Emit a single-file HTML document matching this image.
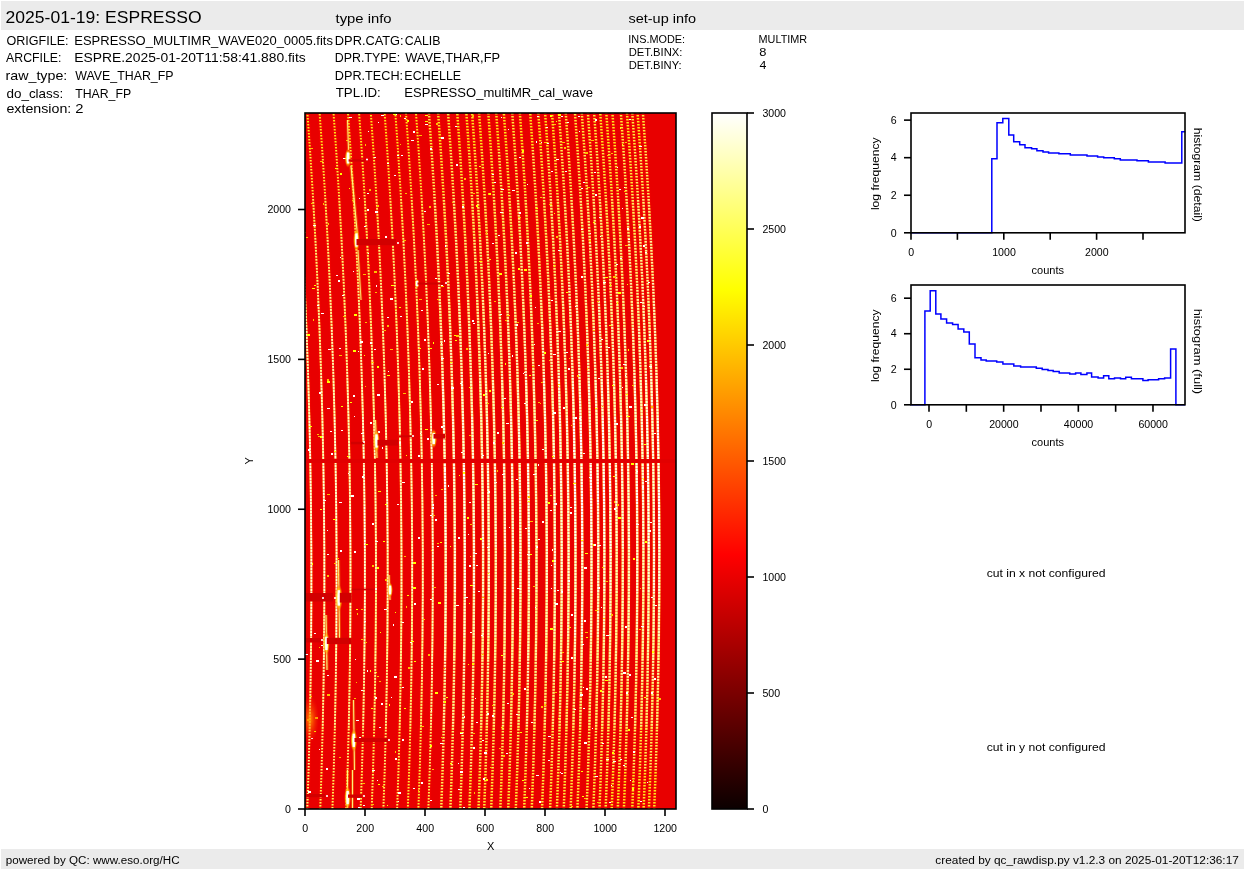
<!DOCTYPE html><html><head><meta charset="utf-8"><style>html,body{margin:0;padding:0;background:#fff;overflow:hidden}svg{display:block}</style></head><body>
<svg width="1245" height="870" viewBox="0 0 1245 870" style="will-change:transform">
<rect x="0" y="0" width="1245" height="870" fill="#fff"/>
<rect x="1" y="1" width="1243" height="29" fill="#ebebeb"/>
<rect x="1" y="849" width="1243" height="20" fill="#ebebeb"/>
<text transform="translate(5.56 22.90) scale(1.0574 1)" font-family="Liberation Sans" font-size="16.6" fill="#000">2025-01-19: ESPRESSO</text>
<text transform="translate(335.53 22.90) scale(1.1681 1)" font-family="Liberation Sans" font-size="12.7" fill="#000">type info</text>
<text transform="translate(628.48 22.90) scale(1.1410 1)" font-family="Liberation Sans" font-size="12.7" fill="#000">set-up info</text>
<text transform="translate(6.48 44.60) scale(0.9897 1)" font-family="Liberation Sans" font-size="12.7" fill="#000">ORIGFILE:</text>
<text transform="translate(6.08 61.70) scale(0.9679 1)" font-family="Liberation Sans" font-size="12.7" fill="#000">ARCFILE:</text>
<text transform="translate(5.49 79.80) scale(1.1227 1)" font-family="Liberation Sans" font-size="12.7" fill="#000">raw_type:</text>
<text transform="translate(6.46 97.60) scale(1.0590 1)" font-family="Liberation Sans" font-size="12.7" fill="#000">do_class:</text>
<text transform="translate(6.43 113.30) scale(1.1220 1)" font-family="Liberation Sans" font-size="12.7" fill="#000">extension:</text>
<text transform="translate(74.32 44.60) scale(1.0228 1)" font-family="Liberation Sans" font-size="12.7" fill="#000">ESPRESSO_MULTIMR_WAVE020_0005.fits</text>
<text transform="translate(74.24 61.70) scale(1.0913 1)" font-family="Liberation Sans" font-size="12.7" fill="#000">ESPRE.2025-01-20T11:58:41.880.fits</text>
<text transform="translate(75.21 79.80) scale(0.9747 1)" font-family="Liberation Sans" font-size="12.7" fill="#000">WAVE_THAR_FP</text>
<text transform="translate(75.17 97.60) scale(0.9669 1)" font-family="Liberation Sans" font-size="12.7" fill="#000">THAR_FP</text>
<text transform="translate(75.33 113.30) scale(1.1645 1)" font-family="Liberation Sans" font-size="12.7" fill="#000">2</text>
<text transform="translate(334.83 45.00) scale(1.0099 1)" font-family="Liberation Sans" font-size="12.7" fill="#000">DPR.CATG:</text>
<text transform="translate(334.87 62.20) scale(0.9761 1)" font-family="Liberation Sans" font-size="12.7" fill="#000">DPR.TYPE:</text>
<text transform="translate(334.85 79.50) scale(0.9971 1)" font-family="Liberation Sans" font-size="12.7" fill="#000">DPR.TECH:</text>
<text transform="translate(335.64 97.20) scale(1.0468 1)" font-family="Liberation Sans" font-size="12.7" fill="#000">TPL.ID:</text>
<text transform="translate(404.84 45.00) scale(0.9734 1)" font-family="Liberation Sans" font-size="12.7" fill="#000">CALIB</text>
<text transform="translate(405.20 62.20) scale(1.0117 1)" font-family="Liberation Sans" font-size="12.7" fill="#000">WAVE,THAR,FP</text>
<text transform="translate(404.36 79.50) scale(0.9815 1)" font-family="Liberation Sans" font-size="12.7" fill="#000">ECHELLE</text>
<text transform="translate(404.31 97.20) scale(1.0287 1)" font-family="Liberation Sans" font-size="12.7" fill="#000">ESPRESSO_multiMR_cal_wave</text>
<text transform="translate(628.34 42.85) scale(1.0070 1)" font-family="Liberation Sans" font-size="10.8" fill="#000">INS.MODE:</text>
<text transform="translate(628.73 55.70) scale(1.0414 1)" font-family="Liberation Sans" font-size="10.8" fill="#000">DET.BINX:</text>
<text transform="translate(628.74 68.55) scale(1.0376 1)" font-family="Liberation Sans" font-size="10.8" fill="#000">DET.BINY:</text>
<text transform="translate(758.56 42.85) scale(1.0044 1)" font-family="Liberation Sans" font-size="10.8" fill="#000">MULTIMR</text>
<text transform="translate(759.16 55.70) scale(1.1934 1)" font-family="Liberation Sans" font-size="10.8" fill="#000">8</text>
<text transform="translate(759.43 68.55) scale(1.1432 1)" font-family="Liberation Sans" font-size="10.8" fill="#000">4</text>
<text transform="translate(986.66 576.70) scale(1.1060 1)" font-family="Liberation Sans" font-size="11.0" fill="#000">cut in x not configured</text>
<text transform="translate(986.66 750.90) scale(1.1060 1)" font-family="Liberation Sans" font-size="11.0" fill="#000">cut in y not configured</text>
<text transform="translate(5.72 863.80) scale(1.0583 1)" font-family="Liberation Sans" font-size="11.0" fill="#000">powered by QC: www.eso.org/HC</text>
<text transform="translate(935.37 863.80) scale(1.0776 1)" font-family="Liberation Sans" font-size="11.0" fill="#000">created by qc_rawdisp.py v1.2.3 on 2025-01-20T12:36:17</text>
<defs><clipPath id="hm"><rect x="305.00" y="113.00" width="371.00" height="696.00"/></clipPath></defs>
<g clip-path="url(#hm)">
<rect x="305.00" y="113.00" width="371.00" height="696.00" fill="#e80000"/>
<path d="M293.80 105.00Q320.11 460.00 307.09 815.00M306.82 105.00Q333.14 460.00 320.06 815.00M319.04 105.00Q345.37 460.00 332.22 815.00M332.97 105.00Q359.30 460.00 346.08 815.00M347.39 105.00Q373.73 460.00 360.44 815.00M358.51 105.00Q384.86 460.00 371.51 815.00M370.23 105.00Q396.59 460.00 383.18 815.00M384.05 105.00Q410.42 460.00 396.94 815.00M394.77 105.00Q421.14 460.00 407.61 815.00M405.39 105.00Q431.77 460.00 418.18 815.00M415.41 105.00Q441.79 460.00 428.15 815.00M428.33 105.00Q454.72 460.00 441.01 815.00M437.55 105.00Q463.94 460.00 450.19 815.00M447.47 105.00Q473.87 460.00 460.06 815.00M456.68 105.00Q483.09 460.00 469.23 815.00M465.80 105.00Q492.21 460.00 478.31 815.00M471.51 105.00Q497.92 460.00 483.99 815.00M478.52 105.00Q504.94 460.00 490.97 815.00M487.74 105.00Q514.16 460.00 500.14 815.00M495.65 105.00Q522.08 460.00 508.02 815.00M503.26 105.00Q529.69 460.00 515.59 815.00M511.68 105.00Q538.11 460.00 523.97 815.00M519.29 105.00Q545.73 460.00 531.55 815.00M529.61 105.00Q556.06 460.00 541.82 815.00M537.73 105.00Q564.17 460.00 549.89 815.00M544.54 105.00Q570.99 460.00 556.67 815.00M551.45 105.00Q577.91 460.00 563.55 815.00M558.37 105.00Q584.82 460.00 570.43 815.00M565.18 105.00Q591.64 460.00 577.21 815.00M574.40 105.00Q600.86 460.00 586.38 815.00M581.21 105.00Q607.67 460.00 593.16 815.00M587.32 105.00Q613.79 460.00 599.24 815.00M593.53 105.00Q620.00 460.00 605.42 815.00M599.64 105.00Q626.12 460.00 611.50 815.00M605.75 105.00Q632.23 460.00 617.58 815.00M611.87 105.00Q638.34 460.00 623.67 815.00M620.28 105.00Q646.76 460.00 632.04 815.00M626.39 105.00Q652.88 460.00 638.12 815.00M631.70 105.00Q658.19 460.00 643.40 815.00M637.01 105.00Q663.50 460.00 648.69 815.00M642.32 105.00Q668.81 460.00 653.97 815.00" fill="none" stroke="#ff0800" stroke-width="4.5" stroke-opacity="0.3"/>
<defs>
<pattern id="g00" patternUnits="userSpaceOnUse" x="0" y="0" width="10" height="3"><rect x="0" y="0" width="10" height="1" fill="#fff"/></pattern>
<pattern id="g01" patternUnits="userSpaceOnUse" x="0" y="1" width="10" height="3"><rect x="0" y="0" width="10" height="1" fill="#fff"/></pattern>
<pattern id="g02" patternUnits="userSpaceOnUse" x="0" y="2" width="10" height="3"><rect x="0" y="0" width="10" height="1" fill="#fff"/></pattern>
<mask id="gm0" maskUnits="userSpaceOnUse" x="300" y="100" width="400" height="720"><rect x="300" y="100" width="400" height="720" fill="url(#g00)"/><rect x="300" y="100" width="400" height="100" fill="url(#g01)" fill-opacity="0.50"/><rect x="300" y="100" width="400" height="100" fill="url(#g02)" fill-opacity="0.05"/><rect x="300" y="200" width="400" height="100" fill="url(#g01)" fill-opacity="0.72"/><rect x="300" y="200" width="400" height="100" fill="url(#g02)" fill-opacity="0.20"/><rect x="300" y="300" width="400" height="80" fill="url(#g01)" fill-opacity="0.90"/><rect x="300" y="300" width="400" height="80" fill="url(#g02)" fill-opacity="0.35"/><rect x="300" y="380" width="400" height="280" fill="url(#g01)" fill-opacity="1.00"/><rect x="300" y="380" width="400" height="280" fill="url(#g02)" fill-opacity="0.65"/><rect x="300" y="660" width="400" height="70" fill="url(#g01)" fill-opacity="0.85"/><rect x="300" y="660" width="400" height="70" fill="url(#g02)" fill-opacity="0.30"/><rect x="300" y="730" width="400" height="90" fill="url(#g01)" fill-opacity="0.55"/><rect x="300" y="730" width="400" height="90" fill="url(#g02)" fill-opacity="0.05"/></mask>
<pattern id="g10" patternUnits="userSpaceOnUse" x="0" y="1" width="10" height="3"><rect x="0" y="0" width="10" height="1" fill="#fff"/></pattern>
<pattern id="g11" patternUnits="userSpaceOnUse" x="0" y="2" width="10" height="3"><rect x="0" y="0" width="10" height="1" fill="#fff"/></pattern>
<pattern id="g12" patternUnits="userSpaceOnUse" x="0" y="3" width="10" height="3"><rect x="0" y="0" width="10" height="1" fill="#fff"/></pattern>
<mask id="gm1" maskUnits="userSpaceOnUse" x="300" y="100" width="400" height="720"><rect x="300" y="100" width="400" height="720" fill="url(#g10)"/><rect x="300" y="100" width="400" height="100" fill="url(#g11)" fill-opacity="0.50"/><rect x="300" y="100" width="400" height="100" fill="url(#g12)" fill-opacity="0.05"/><rect x="300" y="200" width="400" height="100" fill="url(#g11)" fill-opacity="0.72"/><rect x="300" y="200" width="400" height="100" fill="url(#g12)" fill-opacity="0.20"/><rect x="300" y="300" width="400" height="80" fill="url(#g11)" fill-opacity="0.90"/><rect x="300" y="300" width="400" height="80" fill="url(#g12)" fill-opacity="0.35"/><rect x="300" y="380" width="400" height="280" fill="url(#g11)" fill-opacity="1.00"/><rect x="300" y="380" width="400" height="280" fill="url(#g12)" fill-opacity="0.65"/><rect x="300" y="660" width="400" height="70" fill="url(#g11)" fill-opacity="0.85"/><rect x="300" y="660" width="400" height="70" fill="url(#g12)" fill-opacity="0.30"/><rect x="300" y="730" width="400" height="90" fill="url(#g11)" fill-opacity="0.55"/><rect x="300" y="730" width="400" height="90" fill="url(#g12)" fill-opacity="0.05"/></mask>
<pattern id="g20" patternUnits="userSpaceOnUse" x="0" y="2" width="10" height="3"><rect x="0" y="0" width="10" height="1" fill="#fff"/></pattern>
<pattern id="g21" patternUnits="userSpaceOnUse" x="0" y="3" width="10" height="3"><rect x="0" y="0" width="10" height="1" fill="#fff"/></pattern>
<pattern id="g22" patternUnits="userSpaceOnUse" x="0" y="4" width="10" height="3"><rect x="0" y="0" width="10" height="1" fill="#fff"/></pattern>
<mask id="gm2" maskUnits="userSpaceOnUse" x="300" y="100" width="400" height="720"><rect x="300" y="100" width="400" height="720" fill="url(#g20)"/><rect x="300" y="100" width="400" height="100" fill="url(#g21)" fill-opacity="0.50"/><rect x="300" y="100" width="400" height="100" fill="url(#g22)" fill-opacity="0.05"/><rect x="300" y="200" width="400" height="100" fill="url(#g21)" fill-opacity="0.72"/><rect x="300" y="200" width="400" height="100" fill="url(#g22)" fill-opacity="0.20"/><rect x="300" y="300" width="400" height="80" fill="url(#g21)" fill-opacity="0.90"/><rect x="300" y="300" width="400" height="80" fill="url(#g22)" fill-opacity="0.35"/><rect x="300" y="380" width="400" height="280" fill="url(#g21)" fill-opacity="1.00"/><rect x="300" y="380" width="400" height="280" fill="url(#g22)" fill-opacity="0.65"/><rect x="300" y="660" width="400" height="70" fill="url(#g21)" fill-opacity="0.85"/><rect x="300" y="660" width="400" height="70" fill="url(#g22)" fill-opacity="0.30"/><rect x="300" y="730" width="400" height="90" fill="url(#g21)" fill-opacity="0.55"/><rect x="300" y="730" width="400" height="90" fill="url(#g22)" fill-opacity="0.05"/></mask>
</defs>
<g mask="url(#gm0)">
<path d="M319.04 105.00Q320.69 127.19 322.18 149.38M332.97 105.00Q334.61 127.19 336.10 149.38M347.39 105.00Q349.04 127.19 350.53 149.38M358.51 105.00Q360.16 127.19 361.65 149.38M384.05 105.00Q385.70 127.19 387.19 149.38M415.41 105.00Q417.06 127.19 418.55 149.38M322.18 149.38Q323.67 171.56 325.01 193.75M336.10 149.38Q337.60 171.56 338.93 193.75M350.53 149.38Q352.02 171.56 353.36 193.75M361.65 149.38Q363.14 171.56 364.48 193.75M387.19 149.38Q388.69 171.56 390.02 193.75M418.55 149.38Q420.04 171.56 421.38 193.75M325.01 193.75Q326.34 215.94 327.53 238.12M333.71 770.62Q333.04 792.81 332.22 815.00M338.93 193.75Q340.27 215.94 341.45 238.12M347.58 770.62Q346.91 792.81 346.08 815.00M353.36 193.75Q354.69 215.94 355.88 238.12M361.95 770.62Q361.27 792.81 360.44 815.00M364.48 193.75Q365.81 215.94 367.00 238.12M367.00 238.12Q368.18 260.31 369.20 282.50M374.23 726.25Q373.70 748.44 373.03 770.62M373.03 770.62Q372.35 792.81 371.51 815.00M390.02 193.75Q391.36 215.94 392.54 238.12M399.69 726.25Q399.16 748.44 398.47 770.62M398.47 770.62Q397.78 792.81 396.94 815.00M421.38 193.75Q422.72 215.94 423.90 238.12M429.70 770.62Q429.00 792.81 428.15 815.00M327.53 238.12Q328.71 260.31 329.74 282.50M334.89 726.25Q334.38 748.44 333.71 770.62M341.45 238.12Q342.63 260.31 343.66 282.50M343.66 282.50Q344.69 304.69 345.56 326.88M348.77 726.25Q348.25 748.44 347.58 770.62M355.88 238.12Q357.06 260.31 358.09 282.50M363.15 726.25Q362.63 748.44 361.95 770.62M369.20 282.50Q370.23 304.69 371.10 326.88M375.12 681.88Q374.75 704.06 374.23 726.25M392.54 238.12Q393.72 260.31 394.75 282.50M394.75 282.50Q395.77 304.69 396.64 326.88M400.59 681.88Q400.22 704.06 399.69 726.25M423.90 238.12Q425.08 260.31 426.10 282.50M430.94 726.25Q430.40 748.44 429.70 770.62M329.74 282.50Q330.77 304.69 331.64 326.88M335.76 681.88Q335.40 704.06 334.89 726.25M345.56 326.88Q346.44 349.06 347.16 371.25M350.22 637.50Q350.01 659.69 349.65 681.88M349.65 681.88Q349.29 704.06 348.77 726.25M358.09 282.50Q359.11 304.69 359.98 326.88M364.03 681.88Q363.67 704.06 363.15 726.25M371.10 326.88Q371.97 349.06 372.69 371.25M372.69 371.25Q373.41 393.44 373.97 415.62M375.98 593.12Q375.92 615.31 375.70 637.50M375.70 637.50Q375.49 659.69 375.12 681.88M396.64 326.88Q397.51 349.06 398.22 371.25M398.22 371.25Q398.94 393.44 399.50 415.62M401.47 593.12Q401.41 615.31 401.19 637.50M401.19 637.50Q400.97 659.69 400.59 681.88M426.10 282.50Q427.12 304.69 427.99 326.88M431.86 681.88Q431.48 704.06 430.94 726.25M331.64 326.88Q332.52 349.06 333.24 371.25M333.24 371.25Q333.96 393.44 334.52 415.62M336.33 637.50Q336.12 659.69 335.76 681.88M347.16 371.25Q347.87 393.44 348.44 415.62M348.44 415.62Q349.00 437.81 349.41 460.00M349.41 460.00Q349.82 482.19 350.08 504.38M350.43 548.75Q350.53 570.94 350.48 593.12M350.48 593.12Q350.43 615.31 350.22 637.50M359.98 326.88Q360.86 349.06 361.57 371.25M361.57 371.25Q362.29 393.44 362.85 415.62M364.61 637.50Q364.40 659.69 364.03 681.88M373.97 415.62Q374.53 437.81 374.94 460.00M374.94 460.00Q375.34 482.19 375.59 504.38M375.59 504.38Q375.84 526.56 375.94 548.75M375.94 548.75Q376.04 570.94 375.98 593.12M399.50 415.62Q400.06 437.81 400.46 460.00M400.46 460.00Q400.86 482.19 401.11 504.38M401.11 504.38Q401.35 526.56 401.45 548.75M401.45 548.75Q401.54 570.94 401.47 593.12M427.99 326.88Q428.86 349.06 429.57 371.25M429.57 371.25Q430.28 393.44 430.83 415.62M432.77 593.12Q432.70 615.31 432.47 637.50M432.47 637.50Q432.24 659.69 431.86 681.88M334.52 415.62Q335.09 437.81 335.50 460.00M335.50 460.00Q335.91 482.19 336.17 504.38M336.17 504.38Q336.43 526.56 336.53 548.75M336.53 548.75Q336.63 570.94 336.58 593.12M336.58 593.12Q336.53 615.31 336.33 637.50M350.08 504.38Q350.33 526.56 350.43 548.75M362.85 415.62Q363.42 437.81 363.83 460.00M363.83 460.00Q364.23 482.19 364.49 504.38M364.84 548.75Q364.94 570.94 364.88 593.12M364.88 593.12Q364.82 615.31 364.61 637.50M430.83 415.62Q431.39 437.81 431.79 460.00M431.79 460.00Q432.18 482.19 432.43 504.38M432.43 504.38Q432.67 526.56 432.75 548.75M432.75 548.75Q432.84 570.94 432.77 593.12M364.49 504.38Q364.74 526.56 364.84 548.75" fill="none" stroke="#ffe000" stroke-width="2.0"/>
<path d="M447.47 105.00Q449.12 127.19 450.61 149.38M459.82 149.38Q461.32 171.56 462.65 193.75M470.81 770.62Q470.10 792.81 469.23 815.00M468.94 149.38Q470.43 171.56 471.77 193.75M479.89 770.62Q479.17 792.81 478.31 815.00M474.65 149.38Q476.15 171.56 477.48 193.75M485.57 770.62Q484.86 792.81 483.99 815.00M506.41 149.38Q507.90 171.56 509.24 193.75M517.20 770.62Q516.48 792.81 515.59 815.00M543.44 770.62Q542.71 792.81 541.82 815.00M558.37 105.00Q560.02 127.19 561.51 149.38M572.07 770.62Q571.33 792.81 570.43 815.00M574.40 105.00Q576.05 127.19 577.54 149.38M588.03 770.62Q587.29 792.81 586.38 815.00M602.79 149.38Q604.28 171.56 605.62 193.75M450.61 149.38Q452.10 171.56 453.44 193.75M461.63 770.62Q460.92 792.81 460.06 815.00M462.65 193.75Q463.99 215.94 465.17 238.12M471.77 193.75Q473.11 215.94 474.28 238.12M481.15 726.25Q480.60 748.44 479.89 770.62M477.48 193.75Q478.82 215.94 479.99 238.12M486.84 726.25Q486.29 748.44 485.57 770.62M509.24 193.75Q510.57 215.94 511.75 238.12M518.49 726.25Q517.92 748.44 517.20 770.62M532.76 149.38Q534.25 171.56 535.59 193.75M535.59 193.75Q536.92 215.94 538.10 238.12M544.74 726.25Q544.17 748.44 543.44 770.62M561.51 149.38Q563.01 171.56 564.34 193.75M573.39 726.25Q572.81 748.44 572.07 770.62M577.54 149.38Q579.04 171.56 580.37 193.75M589.36 726.25Q588.78 748.44 588.03 770.62M605.62 193.75Q606.95 215.94 608.13 238.12M614.51 726.25Q613.92 748.44 613.17 770.62M453.44 193.75Q454.77 215.94 455.95 238.12M462.88 726.25Q462.33 748.44 461.63 770.62M465.17 238.12Q466.35 260.31 467.37 282.50M472.07 726.25Q471.52 748.44 470.81 770.62M474.28 238.12Q475.46 260.31 476.48 282.50M482.10 681.88Q481.70 704.06 481.15 726.25M479.99 238.12Q481.17 260.31 482.19 282.50M487.79 681.88Q487.40 704.06 486.84 726.25M511.75 238.12Q512.93 260.31 513.95 282.50M519.46 681.88Q519.05 704.06 518.49 726.25M538.10 238.12Q539.27 260.31 540.29 282.50M545.73 681.88Q545.31 704.06 544.74 726.25M564.34 193.75Q565.68 215.94 566.85 238.12M574.39 681.88Q573.97 704.06 573.39 726.25M580.37 193.75Q581.71 215.94 582.88 238.12M590.37 681.88Q589.95 704.06 589.36 726.25M608.13 238.12Q609.30 260.31 610.31 282.50M615.54 681.88Q615.11 704.06 614.51 726.25M455.95 238.12Q457.13 260.31 458.15 282.50M463.82 681.88Q463.43 704.06 462.88 726.25M467.37 282.50Q468.39 304.69 469.25 326.88M473.64 637.50Q473.41 659.69 473.01 681.88M473.01 681.88Q472.62 704.06 472.07 726.25M476.48 282.50Q477.50 304.69 478.37 326.88M478.37 326.88Q479.23 349.06 479.94 371.25M482.74 637.50Q482.50 659.69 482.10 681.88M482.19 282.50Q483.21 304.69 484.08 326.88M488.43 637.50Q488.19 659.69 487.79 681.88M513.95 282.50Q514.97 304.69 515.83 326.88M520.11 637.50Q519.86 659.69 519.46 681.88M540.29 282.50Q541.31 304.69 542.17 326.88M546.39 637.50Q546.14 659.69 545.73 681.88M566.85 238.12Q568.03 260.31 569.04 282.50M582.88 238.12Q584.05 260.31 585.07 282.50M585.07 282.50Q586.08 304.69 586.94 326.88M591.06 637.50Q590.80 659.69 590.37 681.88M610.31 282.50Q611.32 304.69 612.18 326.88M616.62 593.12Q616.51 615.31 616.24 637.50M616.24 637.50Q615.97 659.69 615.54 681.88M458.15 282.50Q459.17 304.69 460.04 326.88M460.04 326.88Q460.90 349.06 461.61 371.25M464.45 637.50Q464.21 659.69 463.82 681.88M469.25 326.88Q470.12 349.06 470.82 371.25M470.82 371.25Q471.53 393.44 472.08 415.62M473.96 593.12Q473.88 615.31 473.64 637.50M479.94 371.25Q480.64 393.44 481.19 415.62M481.19 415.62Q481.74 437.81 482.13 460.00M483.06 548.75Q483.14 570.94 483.06 593.12M483.06 593.12Q482.98 615.31 482.74 637.50M484.08 326.88Q484.94 349.06 485.64 371.25M485.64 371.25Q486.35 393.44 486.90 415.62M488.76 593.12Q488.67 615.31 488.43 637.50M515.83 326.88Q516.69 349.06 517.39 371.25M517.39 371.25Q518.09 393.44 518.63 415.62M520.45 593.12Q520.36 615.31 520.11 637.50M542.17 326.88Q543.02 349.06 543.72 371.25M546.74 593.12Q546.65 615.31 546.39 637.50M569.04 282.50Q570.06 304.69 570.91 326.88M570.91 326.88Q571.77 349.06 572.46 371.25M575.07 637.50Q574.81 659.69 574.39 681.88M586.94 326.88Q587.79 349.06 588.48 371.25M591.43 593.12Q591.33 615.31 591.06 637.50M612.18 326.88Q613.03 349.06 613.72 371.25M613.72 371.25Q614.41 393.44 614.94 415.62M616.68 548.75Q616.73 570.94 616.62 593.12M461.61 371.25Q462.32 393.44 462.87 415.62M462.87 415.62Q463.42 437.81 463.81 460.00M464.76 593.12Q464.68 615.31 464.45 637.50M472.08 415.62Q472.63 437.81 473.02 460.00M473.02 460.00Q473.41 482.19 473.65 504.38M473.65 504.38Q473.88 526.56 473.96 548.75M473.96 548.75Q474.04 570.94 473.96 593.12M482.13 460.00Q482.52 482.19 482.75 504.38M482.75 504.38Q482.99 526.56 483.06 548.75M486.90 415.62Q487.44 437.81 487.83 460.00M487.83 460.00Q488.22 482.19 488.46 504.38M488.46 504.38Q488.69 526.56 488.76 548.75M488.76 548.75Q488.84 570.94 488.76 593.12M518.63 415.62Q519.18 437.81 519.56 460.00M519.56 460.00Q519.95 482.19 520.17 504.38M520.17 504.38Q520.40 526.56 520.47 548.75M520.47 548.75Q520.54 570.94 520.45 593.12M543.72 371.25Q544.42 393.44 544.96 415.62M544.96 415.62Q545.50 437.81 545.88 460.00M545.88 460.00Q546.27 482.19 546.49 504.38M546.49 504.38Q546.71 526.56 546.77 548.75M546.77 548.75Q546.84 570.94 546.74 593.12M572.46 371.25Q573.16 393.44 573.70 415.62M575.48 548.75Q575.54 570.94 575.44 593.12M575.44 593.12Q575.33 615.31 575.07 637.50M588.48 371.25Q589.18 393.44 589.71 415.62M589.71 415.62Q590.25 437.81 590.62 460.00M591.48 548.75Q591.54 570.94 591.43 593.12M614.94 415.62Q615.47 437.81 615.84 460.00M615.84 460.00Q616.21 482.19 616.42 504.38M616.42 504.38Q616.63 526.56 616.68 548.75M463.81 460.00Q464.21 482.19 464.44 504.38M464.44 504.38Q464.68 526.56 464.76 548.75M464.76 548.75Q464.84 570.94 464.76 593.12M573.70 415.62Q574.23 437.81 574.61 460.00M574.61 460.00Q574.99 482.19 575.20 504.38M575.20 504.38Q575.42 526.56 575.48 548.75M590.62 460.00Q591.00 482.19 591.21 504.38M591.21 504.38Q591.43 526.56 591.48 548.75M456.68 105.00Q458.33 127.19 459.82 149.38M465.80 105.00Q467.45 127.19 468.94 149.38M471.51 105.00Q473.16 127.19 474.65 149.38M503.26 105.00Q504.92 127.19 506.41 149.38M529.61 105.00Q531.27 127.19 532.76 149.38M599.64 105.00Q601.30 127.19 602.79 149.38M613.17 770.62Q612.42 792.81 611.50 815.00" fill="none" stroke="#ffe000" stroke-width="2.5"/>
<path d="M319.04 105.00Q320.69 127.19 322.18 149.38M332.97 105.00Q334.61 127.19 336.10 149.38M347.39 105.00Q349.04 127.19 350.53 149.38M358.51 105.00Q360.16 127.19 361.65 149.38M384.05 105.00Q385.70 127.19 387.19 149.38M415.41 105.00Q417.06 127.19 418.55 149.38" fill="none" stroke="#fff" stroke-width="1.7" stroke-opacity="0.125"/>
<path d="M322.18 149.38Q323.67 171.56 325.01 193.75M336.10 149.38Q337.60 171.56 338.93 193.75M350.53 149.38Q352.02 171.56 353.36 193.75M361.65 149.38Q363.14 171.56 364.48 193.75M387.19 149.38Q388.69 171.56 390.02 193.75M418.55 149.38Q420.04 171.56 421.38 193.75" fill="none" stroke="#fff" stroke-width="1.7" stroke-opacity="0.250"/>
<path d="M325.01 193.75Q326.34 215.94 327.53 238.12M333.71 770.62Q333.04 792.81 332.22 815.00M338.93 193.75Q340.27 215.94 341.45 238.12M347.58 770.62Q346.91 792.81 346.08 815.00M353.36 193.75Q354.69 215.94 355.88 238.12M361.95 770.62Q361.27 792.81 360.44 815.00M364.48 193.75Q365.81 215.94 367.00 238.12M367.00 238.12Q368.18 260.31 369.20 282.50M374.23 726.25Q373.70 748.44 373.03 770.62M373.03 770.62Q372.35 792.81 371.51 815.00M390.02 193.75Q391.36 215.94 392.54 238.12M399.69 726.25Q399.16 748.44 398.47 770.62M398.47 770.62Q397.78 792.81 396.94 815.00M421.38 193.75Q422.72 215.94 423.90 238.12M429.70 770.62Q429.00 792.81 428.15 815.00" fill="none" stroke="#fff" stroke-width="1.7" stroke-opacity="0.375"/>
<path d="M327.53 238.12Q328.71 260.31 329.74 282.50M334.89 726.25Q334.38 748.44 333.71 770.62M341.45 238.12Q342.63 260.31 343.66 282.50M343.66 282.50Q344.69 304.69 345.56 326.88M348.77 726.25Q348.25 748.44 347.58 770.62M355.88 238.12Q357.06 260.31 358.09 282.50M363.15 726.25Q362.63 748.44 361.95 770.62M369.20 282.50Q370.23 304.69 371.10 326.88M375.12 681.88Q374.75 704.06 374.23 726.25M392.54 238.12Q393.72 260.31 394.75 282.50M394.75 282.50Q395.77 304.69 396.64 326.88M400.59 681.88Q400.22 704.06 399.69 726.25M423.90 238.12Q425.08 260.31 426.10 282.50M430.94 726.25Q430.40 748.44 429.70 770.62" fill="none" stroke="#fff" stroke-width="1.7" stroke-opacity="0.500"/>
<path d="M329.74 282.50Q330.77 304.69 331.64 326.88M335.76 681.88Q335.40 704.06 334.89 726.25M345.56 326.88Q346.44 349.06 347.16 371.25M350.22 637.50Q350.01 659.69 349.65 681.88M349.65 681.88Q349.29 704.06 348.77 726.25M358.09 282.50Q359.11 304.69 359.98 326.88M364.03 681.88Q363.67 704.06 363.15 726.25M371.10 326.88Q371.97 349.06 372.69 371.25M372.69 371.25Q373.41 393.44 373.97 415.62M375.98 593.12Q375.92 615.31 375.70 637.50M375.70 637.50Q375.49 659.69 375.12 681.88M396.64 326.88Q397.51 349.06 398.22 371.25M398.22 371.25Q398.94 393.44 399.50 415.62M401.47 593.12Q401.41 615.31 401.19 637.50M401.19 637.50Q400.97 659.69 400.59 681.88M426.10 282.50Q427.12 304.69 427.99 326.88M431.86 681.88Q431.48 704.06 430.94 726.25" fill="none" stroke="#fff" stroke-width="1.7" stroke-opacity="0.625"/>
<path d="M331.64 326.88Q332.52 349.06 333.24 371.25M333.24 371.25Q333.96 393.44 334.52 415.62M336.33 637.50Q336.12 659.69 335.76 681.88M347.16 371.25Q347.87 393.44 348.44 415.62M348.44 415.62Q349.00 437.81 349.41 460.00M349.41 460.00Q349.82 482.19 350.08 504.38M350.43 548.75Q350.53 570.94 350.48 593.12M350.48 593.12Q350.43 615.31 350.22 637.50M359.98 326.88Q360.86 349.06 361.57 371.25M361.57 371.25Q362.29 393.44 362.85 415.62M364.61 637.50Q364.40 659.69 364.03 681.88M373.97 415.62Q374.53 437.81 374.94 460.00M374.94 460.00Q375.34 482.19 375.59 504.38M375.59 504.38Q375.84 526.56 375.94 548.75M375.94 548.75Q376.04 570.94 375.98 593.12M399.50 415.62Q400.06 437.81 400.46 460.00M400.46 460.00Q400.86 482.19 401.11 504.38M401.11 504.38Q401.35 526.56 401.45 548.75M401.45 548.75Q401.54 570.94 401.47 593.12M427.99 326.88Q428.86 349.06 429.57 371.25M429.57 371.25Q430.28 393.44 430.83 415.62M432.77 593.12Q432.70 615.31 432.47 637.50M432.47 637.50Q432.24 659.69 431.86 681.88" fill="none" stroke="#fff" stroke-width="1.7" stroke-opacity="0.750"/>
<path d="M334.52 415.62Q335.09 437.81 335.50 460.00M335.50 460.00Q335.91 482.19 336.17 504.38M336.17 504.38Q336.43 526.56 336.53 548.75M336.53 548.75Q336.63 570.94 336.58 593.12M336.58 593.12Q336.53 615.31 336.33 637.50M350.08 504.38Q350.33 526.56 350.43 548.75M362.85 415.62Q363.42 437.81 363.83 460.00M363.83 460.00Q364.23 482.19 364.49 504.38M364.84 548.75Q364.94 570.94 364.88 593.12M364.88 593.12Q364.82 615.31 364.61 637.50M430.83 415.62Q431.39 437.81 431.79 460.00M431.79 460.00Q432.18 482.19 432.43 504.38M432.43 504.38Q432.67 526.56 432.75 548.75M432.75 548.75Q432.84 570.94 432.77 593.12" fill="none" stroke="#fff" stroke-width="1.7" stroke-opacity="0.875"/>
<path d="M364.49 504.38Q364.74 526.56 364.84 548.75" fill="none" stroke="#fff" stroke-width="1.7" stroke-opacity="1.000"/>
<path d="M456.68 105.00Q458.33 127.19 459.82 149.38M465.80 105.00Q467.45 127.19 468.94 149.38M471.51 105.00Q473.16 127.19 474.65 149.38M503.26 105.00Q504.92 127.19 506.41 149.38M529.61 105.00Q531.27 127.19 532.76 149.38M599.64 105.00Q601.30 127.19 602.79 149.38M613.17 770.62Q612.42 792.81 611.50 815.00" fill="none" stroke="#fff" stroke-width="2.1" stroke-opacity="0.125"/>
<path d="M447.47 105.00Q449.12 127.19 450.61 149.38M459.82 149.38Q461.32 171.56 462.65 193.75M470.81 770.62Q470.10 792.81 469.23 815.00M468.94 149.38Q470.43 171.56 471.77 193.75M479.89 770.62Q479.17 792.81 478.31 815.00M474.65 149.38Q476.15 171.56 477.48 193.75M485.57 770.62Q484.86 792.81 483.99 815.00M506.41 149.38Q507.90 171.56 509.24 193.75M517.20 770.62Q516.48 792.81 515.59 815.00M543.44 770.62Q542.71 792.81 541.82 815.00M558.37 105.00Q560.02 127.19 561.51 149.38M572.07 770.62Q571.33 792.81 570.43 815.00M574.40 105.00Q576.05 127.19 577.54 149.38M588.03 770.62Q587.29 792.81 586.38 815.00M602.79 149.38Q604.28 171.56 605.62 193.75" fill="none" stroke="#fff" stroke-width="2.1" stroke-opacity="0.250"/>
<path d="M450.61 149.38Q452.10 171.56 453.44 193.75M461.63 770.62Q460.92 792.81 460.06 815.00M462.65 193.75Q463.99 215.94 465.17 238.12M471.77 193.75Q473.11 215.94 474.28 238.12M481.15 726.25Q480.60 748.44 479.89 770.62M477.48 193.75Q478.82 215.94 479.99 238.12M486.84 726.25Q486.29 748.44 485.57 770.62M509.24 193.75Q510.57 215.94 511.75 238.12M518.49 726.25Q517.92 748.44 517.20 770.62M532.76 149.38Q534.25 171.56 535.59 193.75M535.59 193.75Q536.92 215.94 538.10 238.12M544.74 726.25Q544.17 748.44 543.44 770.62M561.51 149.38Q563.01 171.56 564.34 193.75M573.39 726.25Q572.81 748.44 572.07 770.62M577.54 149.38Q579.04 171.56 580.37 193.75M589.36 726.25Q588.78 748.44 588.03 770.62M605.62 193.75Q606.95 215.94 608.13 238.12M614.51 726.25Q613.92 748.44 613.17 770.62" fill="none" stroke="#fff" stroke-width="2.1" stroke-opacity="0.375"/>
<path d="M453.44 193.75Q454.77 215.94 455.95 238.12M462.88 726.25Q462.33 748.44 461.63 770.62M465.17 238.12Q466.35 260.31 467.37 282.50M472.07 726.25Q471.52 748.44 470.81 770.62M474.28 238.12Q475.46 260.31 476.48 282.50M482.10 681.88Q481.70 704.06 481.15 726.25M479.99 238.12Q481.17 260.31 482.19 282.50M487.79 681.88Q487.40 704.06 486.84 726.25M511.75 238.12Q512.93 260.31 513.95 282.50M519.46 681.88Q519.05 704.06 518.49 726.25M538.10 238.12Q539.27 260.31 540.29 282.50M545.73 681.88Q545.31 704.06 544.74 726.25M564.34 193.75Q565.68 215.94 566.85 238.12M574.39 681.88Q573.97 704.06 573.39 726.25M580.37 193.75Q581.71 215.94 582.88 238.12M590.37 681.88Q589.95 704.06 589.36 726.25M608.13 238.12Q609.30 260.31 610.31 282.50M615.54 681.88Q615.11 704.06 614.51 726.25" fill="none" stroke="#fff" stroke-width="2.1" stroke-opacity="0.500"/>
<path d="M455.95 238.12Q457.13 260.31 458.15 282.50M463.82 681.88Q463.43 704.06 462.88 726.25M467.37 282.50Q468.39 304.69 469.25 326.88M473.64 637.50Q473.41 659.69 473.01 681.88M473.01 681.88Q472.62 704.06 472.07 726.25M476.48 282.50Q477.50 304.69 478.37 326.88M478.37 326.88Q479.23 349.06 479.94 371.25M482.74 637.50Q482.50 659.69 482.10 681.88M482.19 282.50Q483.21 304.69 484.08 326.88M488.43 637.50Q488.19 659.69 487.79 681.88M513.95 282.50Q514.97 304.69 515.83 326.88M520.11 637.50Q519.86 659.69 519.46 681.88M540.29 282.50Q541.31 304.69 542.17 326.88M546.39 637.50Q546.14 659.69 545.73 681.88M566.85 238.12Q568.03 260.31 569.04 282.50M582.88 238.12Q584.05 260.31 585.07 282.50M585.07 282.50Q586.08 304.69 586.94 326.88M591.06 637.50Q590.80 659.69 590.37 681.88M610.31 282.50Q611.32 304.69 612.18 326.88M616.62 593.12Q616.51 615.31 616.24 637.50M616.24 637.50Q615.97 659.69 615.54 681.88" fill="none" stroke="#fff" stroke-width="2.1" stroke-opacity="0.625"/>
<path d="M458.15 282.50Q459.17 304.69 460.04 326.88M460.04 326.88Q460.90 349.06 461.61 371.25M464.45 637.50Q464.21 659.69 463.82 681.88M469.25 326.88Q470.12 349.06 470.82 371.25M470.82 371.25Q471.53 393.44 472.08 415.62M473.96 593.12Q473.88 615.31 473.64 637.50M479.94 371.25Q480.64 393.44 481.19 415.62M481.19 415.62Q481.74 437.81 482.13 460.00M483.06 548.75Q483.14 570.94 483.06 593.12M483.06 593.12Q482.98 615.31 482.74 637.50M484.08 326.88Q484.94 349.06 485.64 371.25M485.64 371.25Q486.35 393.44 486.90 415.62M488.76 593.12Q488.67 615.31 488.43 637.50M515.83 326.88Q516.69 349.06 517.39 371.25M517.39 371.25Q518.09 393.44 518.63 415.62M520.45 593.12Q520.36 615.31 520.11 637.50M542.17 326.88Q543.02 349.06 543.72 371.25M546.74 593.12Q546.65 615.31 546.39 637.50M569.04 282.50Q570.06 304.69 570.91 326.88M570.91 326.88Q571.77 349.06 572.46 371.25M575.07 637.50Q574.81 659.69 574.39 681.88M586.94 326.88Q587.79 349.06 588.48 371.25M591.43 593.12Q591.33 615.31 591.06 637.50M612.18 326.88Q613.03 349.06 613.72 371.25M613.72 371.25Q614.41 393.44 614.94 415.62M616.68 548.75Q616.73 570.94 616.62 593.12" fill="none" stroke="#fff" stroke-width="2.1" stroke-opacity="0.750"/>
<path d="M461.61 371.25Q462.32 393.44 462.87 415.62M462.87 415.62Q463.42 437.81 463.81 460.00M464.76 593.12Q464.68 615.31 464.45 637.50M472.08 415.62Q472.63 437.81 473.02 460.00M473.02 460.00Q473.41 482.19 473.65 504.38M473.65 504.38Q473.88 526.56 473.96 548.75M473.96 548.75Q474.04 570.94 473.96 593.12M482.13 460.00Q482.52 482.19 482.75 504.38M482.75 504.38Q482.99 526.56 483.06 548.75M486.90 415.62Q487.44 437.81 487.83 460.00M487.83 460.00Q488.22 482.19 488.46 504.38M488.46 504.38Q488.69 526.56 488.76 548.75M488.76 548.75Q488.84 570.94 488.76 593.12M518.63 415.62Q519.18 437.81 519.56 460.00M519.56 460.00Q519.95 482.19 520.17 504.38M520.17 504.38Q520.40 526.56 520.47 548.75M520.47 548.75Q520.54 570.94 520.45 593.12M543.72 371.25Q544.42 393.44 544.96 415.62M544.96 415.62Q545.50 437.81 545.88 460.00M545.88 460.00Q546.27 482.19 546.49 504.38M546.49 504.38Q546.71 526.56 546.77 548.75M546.77 548.75Q546.84 570.94 546.74 593.12M572.46 371.25Q573.16 393.44 573.70 415.62M575.48 548.75Q575.54 570.94 575.44 593.12M575.44 593.12Q575.33 615.31 575.07 637.50M588.48 371.25Q589.18 393.44 589.71 415.62M589.71 415.62Q590.25 437.81 590.62 460.00M591.48 548.75Q591.54 570.94 591.43 593.12M614.94 415.62Q615.47 437.81 615.84 460.00M615.84 460.00Q616.21 482.19 616.42 504.38M616.42 504.38Q616.63 526.56 616.68 548.75" fill="none" stroke="#fff" stroke-width="2.1" stroke-opacity="0.875"/>
<path d="M463.81 460.00Q464.21 482.19 464.44 504.38M464.44 504.38Q464.68 526.56 464.76 548.75M464.76 548.75Q464.84 570.94 464.76 593.12M573.70 415.62Q574.23 437.81 574.61 460.00M574.61 460.00Q574.99 482.19 575.20 504.38M575.20 504.38Q575.42 526.56 575.48 548.75M590.62 460.00Q591.00 482.19 591.21 504.38M591.21 504.38Q591.43 526.56 591.48 548.75" fill="none" stroke="#fff" stroke-width="2.1" stroke-opacity="1.000"/>
</g>
<g mask="url(#gm1)">
<path d="M293.80 105.00Q295.45 127.19 296.94 149.38M306.82 105.00Q308.47 127.19 309.96 149.38M370.23 105.00Q371.88 127.19 373.37 149.38M394.77 105.00Q396.42 127.19 397.91 149.38M296.94 149.38Q298.43 171.56 299.76 193.75M309.96 149.38Q311.45 171.56 312.79 193.75M373.37 149.38Q374.86 171.56 376.20 193.75M397.91 149.38Q399.41 171.56 400.74 193.75M409.15 770.62Q408.46 792.81 407.61 815.00M299.76 193.75Q301.10 215.94 302.28 238.12M312.79 193.75Q314.12 215.94 315.31 238.12M321.54 770.62Q320.87 792.81 320.06 815.00M376.20 193.75Q377.54 215.94 378.72 238.12M384.70 770.62Q384.02 792.81 383.18 815.00M400.74 193.75Q402.08 215.94 403.26 238.12M410.37 726.25Q409.84 748.44 409.15 770.62M302.28 238.12Q303.47 260.31 304.50 282.50M308.56 770.62Q307.90 792.81 307.09 815.00M315.31 238.12Q316.49 260.31 317.52 282.50M322.71 726.25Q322.20 748.44 321.54 770.62M378.72 238.12Q379.90 260.31 380.92 282.50M385.91 726.25Q385.38 748.44 384.70 770.62M403.26 238.12Q404.44 260.31 405.46 282.50M405.46 282.50Q406.49 304.69 407.36 326.88M411.28 681.88Q410.90 704.06 410.37 726.25M304.50 282.50Q305.53 304.69 306.40 326.88M310.59 681.88Q310.24 704.06 309.73 726.25M309.73 726.25Q309.22 748.44 308.56 770.62M317.52 282.50Q318.55 304.69 319.42 326.88M319.42 326.88Q320.30 349.06 321.02 371.25M323.58 681.88Q323.22 704.06 322.71 726.25M380.92 282.50Q381.95 304.69 382.82 326.88M382.82 326.88Q383.69 349.06 384.41 371.25M387.40 637.50Q387.18 659.69 386.81 681.88M386.81 681.88Q386.44 704.06 385.91 726.25M407.36 326.88Q408.23 349.06 408.94 371.25M408.94 371.25Q409.65 393.44 410.21 415.62M412.17 593.12Q412.11 615.31 411.88 637.50M411.88 637.50Q411.66 659.69 411.28 681.88M306.40 326.88Q307.28 349.06 308.00 371.25M308.00 371.25Q308.72 393.44 309.29 415.62M311.14 637.50Q310.94 659.69 310.59 681.88M321.02 371.25Q321.74 393.44 322.31 415.62M322.31 415.62Q322.88 437.81 323.29 460.00M324.38 593.12Q324.34 615.31 324.13 637.50M324.13 637.50Q323.93 659.69 323.58 681.88M384.41 371.25Q385.12 393.44 385.68 415.62M385.68 415.62Q386.24 437.81 386.65 460.00M387.64 548.75Q387.74 570.94 387.68 593.12M387.68 593.12Q387.61 615.31 387.40 637.50M410.21 415.62Q410.77 437.81 411.17 460.00M411.17 460.00Q411.57 482.19 411.81 504.38M411.81 504.38Q412.06 526.56 412.15 548.75M412.15 548.75Q412.24 570.94 412.17 593.12M309.29 415.62Q309.86 437.81 310.28 460.00M310.28 460.00Q310.69 482.19 310.95 504.38M310.95 504.38Q311.22 526.56 311.32 548.75M311.32 548.75Q311.43 570.94 311.39 593.12M311.39 593.12Q311.34 615.31 311.14 637.50M323.29 460.00Q323.70 482.19 323.96 504.38M323.96 504.38Q324.22 526.56 324.33 548.75M324.33 548.75Q324.43 570.94 324.38 593.12M386.65 460.00Q387.05 482.19 387.30 504.38M387.30 504.38Q387.55 526.56 387.64 548.75" fill="none" stroke="#ffe000" stroke-width="2.0"/>
<path d="M544.54 105.00Q546.19 127.19 547.69 149.38M551.45 105.00Q553.11 127.19 554.60 149.38M605.75 105.00Q607.41 127.19 608.90 149.38M619.25 770.62Q618.50 792.81 617.58 815.00M611.87 105.00Q613.52 127.19 615.01 149.38M625.34 770.62Q624.58 792.81 623.67 815.00M633.72 770.62Q632.96 792.81 632.04 815.00M637.01 105.00Q638.67 127.19 640.16 149.38M650.38 770.62Q649.61 792.81 648.69 815.00M655.66 770.62Q654.90 792.81 653.97 815.00M547.69 149.38Q549.18 171.56 550.52 193.75M559.61 726.25Q559.04 748.44 558.30 770.62M557.43 193.75Q558.76 215.94 559.94 238.12M566.50 726.25Q565.92 748.44 565.19 770.62M590.47 149.38Q591.96 171.56 593.30 193.75M602.24 726.25Q601.65 748.44 600.90 770.62M596.68 149.38Q598.17 171.56 599.51 193.75M608.43 726.25Q607.83 748.44 607.08 770.62M611.73 193.75Q613.06 215.94 614.24 238.12M620.60 726.25Q620.01 748.44 619.25 770.62M617.84 193.75Q619.17 215.94 620.35 238.12M626.69 726.25Q626.10 748.44 625.34 770.62M623.43 149.38Q624.92 171.56 626.26 193.75M635.08 726.25Q634.48 748.44 633.72 770.62M640.16 149.38Q641.66 171.56 642.99 193.75M651.74 726.25Q651.14 748.44 650.38 770.62M645.47 149.38Q646.97 171.56 648.30 193.75M657.03 726.25Q656.43 748.44 655.66 770.62M550.52 193.75Q551.85 215.94 553.03 238.12M553.03 238.12Q554.20 260.31 555.22 282.50M560.61 681.88Q560.19 704.06 559.61 726.25M559.94 238.12Q561.11 260.31 562.13 282.50M567.50 681.88Q567.08 704.06 566.50 726.25M593.30 193.75Q594.63 215.94 595.80 238.12M603.25 681.88Q602.83 704.06 602.24 726.25M599.51 193.75Q600.84 215.94 602.01 238.12M609.45 681.88Q609.02 704.06 608.43 726.25M614.24 238.12Q615.41 260.31 616.42 282.50M621.63 681.88Q621.20 704.06 620.60 726.25M620.35 238.12Q621.52 260.31 622.53 282.50M627.72 681.88Q627.29 704.06 626.69 726.25M626.26 193.75Q627.59 215.94 628.76 238.12M636.11 681.88Q635.67 704.06 635.08 726.25M642.99 193.75Q644.32 215.94 645.49 238.12M652.79 681.88Q652.35 704.06 651.74 726.25M648.30 193.75Q649.63 215.94 650.80 238.12M658.08 681.88Q657.64 704.06 657.03 726.25M555.22 282.50Q556.23 304.69 557.09 326.88M561.28 637.50Q561.02 659.69 560.61 681.88M562.13 282.50Q563.14 304.69 564.00 326.88M568.18 637.50Q567.92 659.69 567.50 681.88M595.80 238.12Q596.98 260.31 597.99 282.50M603.95 637.50Q603.68 659.69 603.25 681.88M602.01 238.12Q603.19 260.31 604.20 282.50M610.15 637.50Q609.88 659.69 609.45 681.88M616.42 282.50Q617.43 304.69 618.29 326.88M622.34 637.50Q622.06 659.69 621.63 681.88M622.53 282.50Q623.54 304.69 624.39 326.88M628.43 637.50Q628.16 659.69 627.72 681.88M628.76 238.12Q629.94 260.31 630.95 282.50M630.95 282.50Q631.96 304.69 632.81 326.88M636.83 637.50Q636.55 659.69 636.11 681.88M645.49 238.12Q646.66 260.31 647.68 282.50M647.68 282.50Q648.69 304.69 649.53 326.88M653.51 637.50Q653.23 659.69 652.79 681.88M650.80 238.12Q651.97 260.31 652.98 282.50M658.81 637.50Q658.53 659.69 658.08 681.88M557.09 326.88Q557.95 349.06 558.64 371.25M561.64 593.12Q561.54 615.31 561.28 637.50M564.00 326.88Q564.86 349.06 565.55 371.25M565.55 371.25Q566.25 393.44 566.79 415.62M568.54 593.12Q568.44 615.31 568.18 637.50M597.99 282.50Q599.00 304.69 599.86 326.88M599.86 326.88Q600.71 349.06 601.40 371.25M604.33 593.12Q604.22 615.31 603.95 637.50M604.20 282.50Q605.21 304.69 606.07 326.88M606.07 326.88Q606.92 349.06 607.61 371.25M610.53 593.12Q610.42 615.31 610.15 637.50M618.29 326.88Q619.14 349.06 619.83 371.25M619.83 371.25Q620.52 393.44 621.05 415.62M622.79 548.75Q622.83 570.94 622.72 593.12M622.72 593.12Q622.61 615.31 622.34 637.50M624.39 326.88Q625.25 349.06 625.94 371.25M625.94 371.25Q626.63 393.44 627.16 415.62M628.89 548.75Q628.93 570.94 628.82 593.12M628.82 593.12Q628.71 615.31 628.43 637.50M632.81 326.88Q633.66 349.06 634.35 371.25M637.22 593.12Q637.10 615.31 636.83 637.50M649.53 326.88Q650.38 349.06 651.07 371.25M653.91 593.12Q653.79 615.31 653.51 637.50M652.98 282.50Q653.99 304.69 654.84 326.88M654.84 326.88Q655.69 349.06 656.38 371.25M659.21 593.12Q659.09 615.31 658.81 637.50M558.64 371.25Q559.34 393.44 559.88 415.62M559.88 415.62Q560.42 437.81 560.80 460.00M560.80 460.00Q561.18 482.19 561.40 504.38M561.40 504.38Q561.62 526.56 561.68 548.75M561.68 548.75Q561.74 570.94 561.64 593.12M566.79 415.62Q567.33 437.81 567.70 460.00M567.70 460.00Q568.08 482.19 568.30 504.38M568.30 504.38Q568.52 526.56 568.58 548.75M568.58 548.75Q568.64 570.94 568.54 593.12M601.40 371.25Q602.10 393.44 602.63 415.62M604.38 548.75Q604.44 570.94 604.33 593.12M607.61 371.25Q608.30 393.44 608.84 415.62M608.84 415.62Q609.37 437.81 609.74 460.00M610.58 548.75Q610.63 570.94 610.53 593.12M621.05 415.62Q621.58 437.81 621.95 460.00M621.95 460.00Q622.32 482.19 622.53 504.38M622.53 504.38Q622.74 526.56 622.79 548.75M627.16 415.62Q627.69 437.81 628.05 460.00M628.05 460.00Q628.42 482.19 628.63 504.38M628.63 504.38Q628.84 526.56 628.89 548.75M634.35 371.25Q635.04 393.44 635.57 415.62M635.57 415.62Q636.09 437.81 636.46 460.00M637.04 504.38Q637.24 526.56 637.29 548.75M637.29 548.75Q637.33 570.94 637.22 593.12M651.07 371.25Q651.76 393.44 652.28 415.62M652.28 415.62Q652.81 437.81 653.18 460.00M653.18 460.00Q653.54 482.19 653.74 504.38M653.74 504.38Q653.95 526.56 653.99 548.75M653.99 548.75Q654.03 570.94 653.91 593.12M656.38 371.25Q657.06 393.44 657.59 415.62M659.29 548.75Q659.33 570.94 659.21 593.12M558.30 770.62Q557.57 792.81 556.67 815.00M554.60 149.38Q556.09 171.56 557.43 193.75M565.19 770.62Q564.45 792.81 563.55 815.00M587.32 105.00Q588.97 127.19 590.47 149.38M600.90 770.62Q600.15 792.81 599.24 815.00M593.53 105.00Q595.19 127.19 596.68 149.38M607.08 770.62Q606.33 792.81 605.42 815.00M608.90 149.38Q610.40 171.56 611.73 193.75M615.01 149.38Q616.51 171.56 617.84 193.75M620.28 105.00Q621.94 127.19 623.43 149.38M642.32 105.00Q643.98 127.19 645.47 149.38M602.63 415.62Q603.16 437.81 603.53 460.00M603.53 460.00Q603.91 482.19 604.12 504.38M604.12 504.38Q604.33 526.56 604.38 548.75M609.74 460.00Q610.11 482.19 610.32 504.38M610.32 504.38Q610.53 526.56 610.58 548.75M636.46 460.00Q636.83 482.19 637.04 504.38M657.59 415.62Q658.12 437.81 658.48 460.00M658.48 460.00Q658.84 482.19 659.05 504.38M659.05 504.38Q659.25 526.56 659.29 548.75" fill="none" stroke="#ffe000" stroke-width="2.5"/>
<path d="M293.80 105.00Q295.45 127.19 296.94 149.38M306.82 105.00Q308.47 127.19 309.96 149.38M370.23 105.00Q371.88 127.19 373.37 149.38M394.77 105.00Q396.42 127.19 397.91 149.38" fill="none" stroke="#fff" stroke-width="1.7" stroke-opacity="0.125"/>
<path d="M296.94 149.38Q298.43 171.56 299.76 193.75M309.96 149.38Q311.45 171.56 312.79 193.75M373.37 149.38Q374.86 171.56 376.20 193.75M397.91 149.38Q399.41 171.56 400.74 193.75M409.15 770.62Q408.46 792.81 407.61 815.00" fill="none" stroke="#fff" stroke-width="1.7" stroke-opacity="0.250"/>
<path d="M299.76 193.75Q301.10 215.94 302.28 238.12M312.79 193.75Q314.12 215.94 315.31 238.12M321.54 770.62Q320.87 792.81 320.06 815.00M376.20 193.75Q377.54 215.94 378.72 238.12M384.70 770.62Q384.02 792.81 383.18 815.00M400.74 193.75Q402.08 215.94 403.26 238.12M410.37 726.25Q409.84 748.44 409.15 770.62" fill="none" stroke="#fff" stroke-width="1.7" stroke-opacity="0.375"/>
<path d="M302.28 238.12Q303.47 260.31 304.50 282.50M308.56 770.62Q307.90 792.81 307.09 815.00M315.31 238.12Q316.49 260.31 317.52 282.50M322.71 726.25Q322.20 748.44 321.54 770.62M378.72 238.12Q379.90 260.31 380.92 282.50M385.91 726.25Q385.38 748.44 384.70 770.62M403.26 238.12Q404.44 260.31 405.46 282.50M405.46 282.50Q406.49 304.69 407.36 326.88M411.28 681.88Q410.90 704.06 410.37 726.25" fill="none" stroke="#fff" stroke-width="1.7" stroke-opacity="0.500"/>
<path d="M304.50 282.50Q305.53 304.69 306.40 326.88M310.59 681.88Q310.24 704.06 309.73 726.25M309.73 726.25Q309.22 748.44 308.56 770.62M317.52 282.50Q318.55 304.69 319.42 326.88M319.42 326.88Q320.30 349.06 321.02 371.25M323.58 681.88Q323.22 704.06 322.71 726.25M380.92 282.50Q381.95 304.69 382.82 326.88M382.82 326.88Q383.69 349.06 384.41 371.25M387.40 637.50Q387.18 659.69 386.81 681.88M386.81 681.88Q386.44 704.06 385.91 726.25M407.36 326.88Q408.23 349.06 408.94 371.25M408.94 371.25Q409.65 393.44 410.21 415.62M412.17 593.12Q412.11 615.31 411.88 637.50M411.88 637.50Q411.66 659.69 411.28 681.88" fill="none" stroke="#fff" stroke-width="1.7" stroke-opacity="0.625"/>
<path d="M306.40 326.88Q307.28 349.06 308.00 371.25M308.00 371.25Q308.72 393.44 309.29 415.62M311.14 637.50Q310.94 659.69 310.59 681.88M321.02 371.25Q321.74 393.44 322.31 415.62M322.31 415.62Q322.88 437.81 323.29 460.00M324.38 593.12Q324.34 615.31 324.13 637.50M324.13 637.50Q323.93 659.69 323.58 681.88M384.41 371.25Q385.12 393.44 385.68 415.62M385.68 415.62Q386.24 437.81 386.65 460.00M387.64 548.75Q387.74 570.94 387.68 593.12M387.68 593.12Q387.61 615.31 387.40 637.50M410.21 415.62Q410.77 437.81 411.17 460.00M411.17 460.00Q411.57 482.19 411.81 504.38M411.81 504.38Q412.06 526.56 412.15 548.75M412.15 548.75Q412.24 570.94 412.17 593.12" fill="none" stroke="#fff" stroke-width="1.7" stroke-opacity="0.750"/>
<path d="M309.29 415.62Q309.86 437.81 310.28 460.00M310.28 460.00Q310.69 482.19 310.95 504.38M310.95 504.38Q311.22 526.56 311.32 548.75M311.32 548.75Q311.43 570.94 311.39 593.12M311.39 593.12Q311.34 615.31 311.14 637.50M323.29 460.00Q323.70 482.19 323.96 504.38M323.96 504.38Q324.22 526.56 324.33 548.75M324.33 548.75Q324.43 570.94 324.38 593.12M386.65 460.00Q387.05 482.19 387.30 504.38M387.30 504.38Q387.55 526.56 387.64 548.75" fill="none" stroke="#fff" stroke-width="1.7" stroke-opacity="0.875"/>
<path d="M544.54 105.00Q546.19 127.19 547.69 149.38M551.45 105.00Q553.11 127.19 554.60 149.38M605.75 105.00Q607.41 127.19 608.90 149.38M619.25 770.62Q618.50 792.81 617.58 815.00M611.87 105.00Q613.52 127.19 615.01 149.38M625.34 770.62Q624.58 792.81 623.67 815.00M633.72 770.62Q632.96 792.81 632.04 815.00M637.01 105.00Q638.67 127.19 640.16 149.38M650.38 770.62Q649.61 792.81 648.69 815.00M655.66 770.62Q654.90 792.81 653.97 815.00" fill="none" stroke="#fff" stroke-width="2.1" stroke-opacity="0.125"/>
<path d="M558.30 770.62Q557.57 792.81 556.67 815.00M554.60 149.38Q556.09 171.56 557.43 193.75M565.19 770.62Q564.45 792.81 563.55 815.00M587.32 105.00Q588.97 127.19 590.47 149.38M600.90 770.62Q600.15 792.81 599.24 815.00M593.53 105.00Q595.19 127.19 596.68 149.38M607.08 770.62Q606.33 792.81 605.42 815.00M608.90 149.38Q610.40 171.56 611.73 193.75M615.01 149.38Q616.51 171.56 617.84 193.75M620.28 105.00Q621.94 127.19 623.43 149.38M642.32 105.00Q643.98 127.19 645.47 149.38" fill="none" stroke="#fff" stroke-width="2.1" stroke-opacity="0.250"/>
<path d="M547.69 149.38Q549.18 171.56 550.52 193.75M559.61 726.25Q559.04 748.44 558.30 770.62M557.43 193.75Q558.76 215.94 559.94 238.12M566.50 726.25Q565.92 748.44 565.19 770.62M590.47 149.38Q591.96 171.56 593.30 193.75M602.24 726.25Q601.65 748.44 600.90 770.62M596.68 149.38Q598.17 171.56 599.51 193.75M608.43 726.25Q607.83 748.44 607.08 770.62M611.73 193.75Q613.06 215.94 614.24 238.12M620.60 726.25Q620.01 748.44 619.25 770.62M617.84 193.75Q619.17 215.94 620.35 238.12M626.69 726.25Q626.10 748.44 625.34 770.62M623.43 149.38Q624.92 171.56 626.26 193.75M635.08 726.25Q634.48 748.44 633.72 770.62M640.16 149.38Q641.66 171.56 642.99 193.75M651.74 726.25Q651.14 748.44 650.38 770.62M645.47 149.38Q646.97 171.56 648.30 193.75M657.03 726.25Q656.43 748.44 655.66 770.62" fill="none" stroke="#fff" stroke-width="2.1" stroke-opacity="0.375"/>
<path d="M550.52 193.75Q551.85 215.94 553.03 238.12M553.03 238.12Q554.20 260.31 555.22 282.50M560.61 681.88Q560.19 704.06 559.61 726.25M559.94 238.12Q561.11 260.31 562.13 282.50M567.50 681.88Q567.08 704.06 566.50 726.25M593.30 193.75Q594.63 215.94 595.80 238.12M603.25 681.88Q602.83 704.06 602.24 726.25M599.51 193.75Q600.84 215.94 602.01 238.12M609.45 681.88Q609.02 704.06 608.43 726.25M614.24 238.12Q615.41 260.31 616.42 282.50M621.63 681.88Q621.20 704.06 620.60 726.25M620.35 238.12Q621.52 260.31 622.53 282.50M627.72 681.88Q627.29 704.06 626.69 726.25M626.26 193.75Q627.59 215.94 628.76 238.12M636.11 681.88Q635.67 704.06 635.08 726.25M642.99 193.75Q644.32 215.94 645.49 238.12M652.79 681.88Q652.35 704.06 651.74 726.25M648.30 193.75Q649.63 215.94 650.80 238.12M658.08 681.88Q657.64 704.06 657.03 726.25" fill="none" stroke="#fff" stroke-width="2.1" stroke-opacity="0.500"/>
<path d="M555.22 282.50Q556.23 304.69 557.09 326.88M561.28 637.50Q561.02 659.69 560.61 681.88M562.13 282.50Q563.14 304.69 564.00 326.88M568.18 637.50Q567.92 659.69 567.50 681.88M595.80 238.12Q596.98 260.31 597.99 282.50M603.95 637.50Q603.68 659.69 603.25 681.88M602.01 238.12Q603.19 260.31 604.20 282.50M610.15 637.50Q609.88 659.69 609.45 681.88M616.42 282.50Q617.43 304.69 618.29 326.88M622.34 637.50Q622.06 659.69 621.63 681.88M622.53 282.50Q623.54 304.69 624.39 326.88M628.43 637.50Q628.16 659.69 627.72 681.88M628.76 238.12Q629.94 260.31 630.95 282.50M630.95 282.50Q631.96 304.69 632.81 326.88M636.83 637.50Q636.55 659.69 636.11 681.88M645.49 238.12Q646.66 260.31 647.68 282.50M647.68 282.50Q648.69 304.69 649.53 326.88M653.51 637.50Q653.23 659.69 652.79 681.88M650.80 238.12Q651.97 260.31 652.98 282.50M658.81 637.50Q658.53 659.69 658.08 681.88" fill="none" stroke="#fff" stroke-width="2.1" stroke-opacity="0.625"/>
<path d="M557.09 326.88Q557.95 349.06 558.64 371.25M561.64 593.12Q561.54 615.31 561.28 637.50M564.00 326.88Q564.86 349.06 565.55 371.25M565.55 371.25Q566.25 393.44 566.79 415.62M568.54 593.12Q568.44 615.31 568.18 637.50M597.99 282.50Q599.00 304.69 599.86 326.88M599.86 326.88Q600.71 349.06 601.40 371.25M604.33 593.12Q604.22 615.31 603.95 637.50M604.20 282.50Q605.21 304.69 606.07 326.88M606.07 326.88Q606.92 349.06 607.61 371.25M610.53 593.12Q610.42 615.31 610.15 637.50M618.29 326.88Q619.14 349.06 619.83 371.25M619.83 371.25Q620.52 393.44 621.05 415.62M622.79 548.75Q622.83 570.94 622.72 593.12M622.72 593.12Q622.61 615.31 622.34 637.50M624.39 326.88Q625.25 349.06 625.94 371.25M625.94 371.25Q626.63 393.44 627.16 415.62M628.89 548.75Q628.93 570.94 628.82 593.12M628.82 593.12Q628.71 615.31 628.43 637.50M632.81 326.88Q633.66 349.06 634.35 371.25M637.22 593.12Q637.10 615.31 636.83 637.50M649.53 326.88Q650.38 349.06 651.07 371.25M653.91 593.12Q653.79 615.31 653.51 637.50M652.98 282.50Q653.99 304.69 654.84 326.88M654.84 326.88Q655.69 349.06 656.38 371.25M659.21 593.12Q659.09 615.31 658.81 637.50" fill="none" stroke="#fff" stroke-width="2.1" stroke-opacity="0.750"/>
<path d="M558.64 371.25Q559.34 393.44 559.88 415.62M559.88 415.62Q560.42 437.81 560.80 460.00M560.80 460.00Q561.18 482.19 561.40 504.38M561.40 504.38Q561.62 526.56 561.68 548.75M561.68 548.75Q561.74 570.94 561.64 593.12M566.79 415.62Q567.33 437.81 567.70 460.00M567.70 460.00Q568.08 482.19 568.30 504.38M568.30 504.38Q568.52 526.56 568.58 548.75M568.58 548.75Q568.64 570.94 568.54 593.12M601.40 371.25Q602.10 393.44 602.63 415.62M604.38 548.75Q604.44 570.94 604.33 593.12M607.61 371.25Q608.30 393.44 608.84 415.62M608.84 415.62Q609.37 437.81 609.74 460.00M610.58 548.75Q610.63 570.94 610.53 593.12M621.05 415.62Q621.58 437.81 621.95 460.00M621.95 460.00Q622.32 482.19 622.53 504.38M622.53 504.38Q622.74 526.56 622.79 548.75M627.16 415.62Q627.69 437.81 628.05 460.00M628.05 460.00Q628.42 482.19 628.63 504.38M628.63 504.38Q628.84 526.56 628.89 548.75M634.35 371.25Q635.04 393.44 635.57 415.62M635.57 415.62Q636.09 437.81 636.46 460.00M637.04 504.38Q637.24 526.56 637.29 548.75M637.29 548.75Q637.33 570.94 637.22 593.12M651.07 371.25Q651.76 393.44 652.28 415.62M652.28 415.62Q652.81 437.81 653.18 460.00M653.18 460.00Q653.54 482.19 653.74 504.38M653.74 504.38Q653.95 526.56 653.99 548.75M653.99 548.75Q654.03 570.94 653.91 593.12M656.38 371.25Q657.06 393.44 657.59 415.62M659.29 548.75Q659.33 570.94 659.21 593.12" fill="none" stroke="#fff" stroke-width="2.1" stroke-opacity="0.875"/>
<path d="M602.63 415.62Q603.16 437.81 603.53 460.00M603.53 460.00Q603.91 482.19 604.12 504.38M604.12 504.38Q604.33 526.56 604.38 548.75M609.74 460.00Q610.11 482.19 610.32 504.38M610.32 504.38Q610.53 526.56 610.58 548.75M636.46 460.00Q636.83 482.19 637.04 504.38M657.59 415.62Q658.12 437.81 658.48 460.00M658.48 460.00Q658.84 482.19 659.05 504.38M659.05 504.38Q659.25 526.56 659.29 548.75" fill="none" stroke="#fff" stroke-width="2.1" stroke-opacity="1.000"/>
</g>
<g mask="url(#gm2)">
<path d="M405.39 105.00Q407.04 127.19 408.53 149.38M408.53 149.38Q410.02 171.56 411.36 193.75M419.72 770.62Q419.03 792.81 418.18 815.00M411.36 193.75Q412.70 215.94 413.88 238.12M420.95 726.25Q420.42 748.44 419.72 770.62M413.88 238.12Q415.06 260.31 416.08 282.50M416.08 282.50Q417.11 304.69 417.97 326.88M421.87 681.88Q421.49 704.06 420.95 726.25M417.97 326.88Q418.84 349.06 419.55 371.25M419.55 371.25Q420.27 393.44 420.82 415.62M422.48 637.50Q422.25 659.69 421.87 681.88M420.82 415.62Q421.38 437.81 421.78 460.00M421.78 460.00Q422.18 482.19 422.42 504.38M422.42 504.38Q422.66 526.56 422.75 548.75M422.75 548.75Q422.84 570.94 422.77 593.12M422.77 593.12Q422.70 615.31 422.48 637.50" fill="none" stroke="#ffe000" stroke-width="2.0"/>
<path d="M428.33 105.00Q429.98 127.19 431.47 149.38M440.69 149.38Q442.18 171.56 443.52 193.75M481.66 149.38Q483.16 171.56 484.49 193.75M492.56 770.62Q491.84 792.81 490.97 815.00M490.88 149.38Q492.38 171.56 493.71 193.75M501.73 770.62Q501.02 792.81 500.14 815.00M509.62 770.62Q508.90 792.81 508.02 815.00M511.68 105.00Q513.33 127.19 514.83 149.38M525.58 770.62Q524.85 792.81 523.97 815.00M522.44 149.38Q523.93 171.56 525.27 193.75M533.16 770.62Q532.43 792.81 531.55 815.00M540.87 149.38Q542.37 171.56 543.70 193.75M551.52 770.62Q550.78 792.81 549.89 815.00M565.18 105.00Q566.83 127.19 568.33 149.38M578.85 770.62Q578.11 792.81 577.21 815.00M581.21 105.00Q582.86 127.19 584.36 149.38M594.81 770.62Q594.07 792.81 593.16 815.00M629.54 149.38Q631.04 171.56 632.37 193.75M641.16 726.25Q640.56 748.44 639.80 770.62M631.70 105.00Q633.36 127.19 634.85 149.38M431.47 149.38Q432.97 171.56 434.30 193.75M442.57 770.62Q441.87 792.81 441.01 815.00M443.52 193.75Q444.86 215.94 446.03 238.12M451.75 770.62Q451.05 792.81 450.19 815.00M484.49 193.75Q485.83 215.94 487.01 238.12M493.83 726.25Q493.27 748.44 492.56 770.62M493.71 193.75Q495.05 215.94 496.22 238.12M503.01 726.25Q502.45 748.44 501.73 770.62M498.80 149.38Q500.29 171.56 501.63 193.75M501.63 193.75Q502.96 215.94 504.14 238.12M510.90 726.25Q510.34 748.44 509.62 770.62M514.83 149.38Q516.32 171.56 517.65 193.75M526.87 726.25Q526.30 748.44 525.58 770.62M525.27 193.75Q526.60 215.94 527.78 238.12M534.46 726.25Q533.89 748.44 533.16 770.62M543.70 193.75Q545.04 215.94 546.21 238.12M552.83 726.25Q552.25 748.44 551.52 770.62M568.33 149.38Q569.82 171.56 571.15 193.75M580.18 726.25Q579.59 748.44 578.85 770.62M584.36 149.38Q585.85 171.56 587.18 193.75M596.15 726.25Q595.56 748.44 594.81 770.62M632.37 193.75Q633.70 215.94 634.87 238.12M634.85 149.38Q636.35 171.56 637.68 193.75M646.45 726.25Q645.85 748.44 645.09 770.62M434.30 193.75Q435.64 215.94 436.82 238.12M443.81 726.25Q443.27 748.44 442.57 770.62M446.03 238.12Q447.21 260.31 448.24 282.50M453.00 726.25Q452.45 748.44 451.75 770.62M487.01 238.12Q488.18 260.31 489.20 282.50M494.79 681.88Q494.39 704.06 493.83 726.25M496.22 238.12Q497.40 260.31 498.42 282.50M503.98 681.88Q503.57 704.06 503.01 726.25M504.14 238.12Q505.31 260.31 506.33 282.50M511.87 681.88Q511.46 704.06 510.90 726.25M517.65 193.75Q518.99 215.94 520.17 238.12M527.78 238.12Q528.96 260.31 529.97 282.50M535.44 681.88Q535.03 704.06 534.46 726.25M546.21 238.12Q547.39 260.31 548.41 282.50M553.82 681.88Q553.40 704.06 552.83 726.25M571.15 193.75Q572.49 215.94 573.66 238.12M581.18 681.88Q580.76 704.06 580.18 726.25M587.18 193.75Q588.52 215.94 589.69 238.12M597.16 681.88Q596.73 704.06 596.15 726.25M634.87 238.12Q636.05 260.31 637.06 282.50M642.20 681.88Q641.76 704.06 641.16 726.25M637.68 193.75Q639.01 215.94 640.18 238.12M647.50 681.88Q647.06 704.06 646.45 726.25M436.82 238.12Q438.00 260.31 439.02 282.50M439.02 282.50Q440.04 304.69 440.91 326.88M444.74 681.88Q444.36 704.06 443.81 726.25M448.24 282.50Q449.26 304.69 450.12 326.88M454.56 637.50Q454.32 659.69 453.93 681.88M453.93 681.88Q453.54 704.06 453.00 726.25M489.20 282.50Q490.22 304.69 491.09 326.88M491.09 326.88Q491.95 349.06 492.65 371.25M495.43 637.50Q495.19 659.69 494.79 681.88M498.42 282.50Q499.44 304.69 500.30 326.88M500.30 326.88Q501.16 349.06 501.87 371.25M504.62 637.50Q504.38 659.69 503.98 681.88M506.33 282.50Q507.35 304.69 508.21 326.88M512.52 637.50Q512.27 659.69 511.87 681.88M520.17 238.12Q521.34 260.31 522.36 282.50M522.36 282.50Q523.38 304.69 524.24 326.88M527.85 681.88Q527.44 704.06 526.87 726.25M529.97 282.50Q530.99 304.69 531.85 326.88M531.85 326.88Q532.71 349.06 533.41 371.25M536.45 593.12Q536.35 615.31 536.10 637.50M536.10 637.50Q535.85 659.69 535.44 681.88M548.41 282.50Q549.42 304.69 550.28 326.88M554.49 637.50Q554.23 659.69 553.82 681.88M573.66 238.12Q574.84 260.31 575.85 282.50M589.69 238.12Q590.87 260.31 591.88 282.50M591.88 282.50Q592.89 304.69 593.75 326.88M597.86 637.50Q597.59 659.69 597.16 681.88M637.06 282.50Q638.07 304.69 638.92 326.88M643.32 593.12Q643.20 615.31 642.92 637.50M642.92 637.50Q642.64 659.69 642.20 681.88M640.18 238.12Q641.36 260.31 642.37 282.50M648.22 637.50Q647.94 659.69 647.50 681.88M440.91 326.88Q441.78 349.06 442.49 371.25M445.36 637.50Q445.13 659.69 444.74 681.88M450.12 326.88Q450.99 349.06 451.70 371.25M451.70 371.25Q452.41 393.44 452.96 415.62M454.86 593.12Q454.79 615.31 454.56 637.50M492.65 371.25Q493.36 393.44 493.91 415.62M493.91 415.62Q494.45 437.81 494.84 460.00M495.77 548.75Q495.84 570.94 495.75 593.12M495.75 593.12Q495.67 615.31 495.43 637.50M501.87 371.25Q502.57 393.44 503.12 415.62M503.12 415.62Q503.66 437.81 504.05 460.00M504.97 548.75Q505.04 570.94 504.95 593.12M504.95 593.12Q504.87 615.31 504.62 637.50M508.21 326.88Q509.07 349.06 509.78 371.25M509.78 371.25Q510.48 393.44 511.02 415.62M512.85 593.12Q512.76 615.31 512.52 637.50M524.24 326.88Q525.10 349.06 525.80 371.25M528.85 593.12Q528.76 615.31 528.51 637.50M528.51 637.50Q528.26 659.69 527.85 681.88M533.41 371.25Q534.11 393.44 534.65 415.62M534.65 415.62Q535.19 437.81 535.58 460.00M535.58 460.00Q535.96 482.19 536.18 504.38M536.18 504.38Q536.41 526.56 536.47 548.75M536.47 548.75Q536.54 570.94 536.45 593.12M550.28 326.88Q551.14 349.06 551.83 371.25M551.83 371.25Q552.53 393.44 553.07 415.62M554.84 593.12Q554.74 615.31 554.49 637.50M575.85 282.50Q576.87 304.69 577.72 326.88M577.72 326.88Q578.58 349.06 579.27 371.25M581.87 637.50Q581.60 659.69 581.18 681.88M593.75 326.88Q594.60 349.06 595.29 371.25M598.23 593.12Q598.12 615.31 597.86 637.50M638.92 326.88Q639.77 349.06 640.46 371.25M640.46 371.25Q641.14 393.44 641.67 415.62M643.39 548.75Q643.43 570.94 643.32 593.12M642.37 282.50Q643.38 304.69 644.23 326.88M644.23 326.88Q645.08 349.06 645.76 371.25M648.61 593.12Q648.50 615.31 648.22 637.50M442.49 371.25Q443.19 393.44 443.75 415.62M443.75 415.62Q444.30 437.81 444.70 460.00M445.66 548.75Q445.74 570.94 445.67 593.12M445.67 593.12Q445.59 615.31 445.36 637.50M452.96 415.62Q453.51 437.81 453.91 460.00M453.91 460.00Q454.30 482.19 454.54 504.38M454.54 504.38Q454.78 526.56 454.86 548.75M454.86 548.75Q454.94 570.94 454.86 593.12M494.84 460.00Q495.23 482.19 495.46 504.38M495.46 504.38Q495.69 526.56 495.77 548.75M504.05 460.00Q504.44 482.19 504.67 504.38M504.67 504.38Q504.90 526.56 504.97 548.75M511.02 415.62Q511.57 437.81 511.96 460.00M511.96 460.00Q512.34 482.19 512.57 504.38M512.57 504.38Q512.80 526.56 512.87 548.75M512.87 548.75Q512.94 570.94 512.85 593.12M525.80 371.25Q526.50 393.44 527.04 415.62M527.04 415.62Q527.59 437.81 527.97 460.00M528.87 548.75Q528.94 570.94 528.85 593.12M553.07 415.62Q553.61 437.81 553.99 460.00M553.99 460.00Q554.37 482.19 554.59 504.38M554.59 504.38Q554.81 526.56 554.88 548.75M554.88 548.75Q554.94 570.94 554.84 593.12M579.27 371.25Q579.97 393.44 580.50 415.62M582.28 548.75Q582.34 570.94 582.23 593.12M582.23 593.12Q582.13 615.31 581.87 637.50M595.29 371.25Q595.99 393.44 596.52 415.62M596.52 415.62Q597.06 437.81 597.43 460.00M598.02 504.38Q598.23 526.56 598.28 548.75M598.28 548.75Q598.34 570.94 598.23 593.12M641.67 415.62Q642.20 437.81 642.57 460.00M642.57 460.00Q642.93 482.19 643.14 504.38M643.14 504.38Q643.34 526.56 643.39 548.75M645.76 371.25Q646.45 393.44 646.98 415.62M648.69 548.75Q648.73 570.94 648.61 593.12M444.70 460.00Q445.09 482.19 445.33 504.38M445.33 504.38Q445.57 526.56 445.66 548.75M527.97 460.00Q528.35 482.19 528.58 504.38M528.58 504.38Q528.80 526.56 528.87 548.75M580.50 415.62Q581.04 437.81 581.42 460.00M581.42 460.00Q581.79 482.19 582.01 504.38M582.01 504.38Q582.22 526.56 582.28 548.75M597.43 460.00Q597.80 482.19 598.02 504.38M646.98 415.62Q647.51 437.81 647.87 460.00M647.87 460.00Q648.24 482.19 648.44 504.38M648.44 504.38Q648.65 526.56 648.69 548.75M437.55 105.00Q439.20 127.19 440.69 149.38M478.52 105.00Q480.17 127.19 481.66 149.38M487.74 105.00Q489.39 127.19 490.88 149.38M495.65 105.00Q497.30 127.19 498.80 149.38M519.29 105.00Q520.95 127.19 522.44 149.38M537.73 105.00Q539.38 127.19 540.87 149.38M626.39 105.00Q628.05 127.19 629.54 149.38M639.80 770.62Q639.04 792.81 638.12 815.00M645.09 770.62Q644.33 792.81 643.40 815.00" fill="none" stroke="#ffe000" stroke-width="2.5"/>
<path d="M405.39 105.00Q407.04 127.19 408.53 149.38" fill="none" stroke="#fff" stroke-width="1.7" stroke-opacity="0.125"/>
<path d="M408.53 149.38Q410.02 171.56 411.36 193.75M419.72 770.62Q419.03 792.81 418.18 815.00" fill="none" stroke="#fff" stroke-width="1.7" stroke-opacity="0.250"/>
<path d="M411.36 193.75Q412.70 215.94 413.88 238.12M420.95 726.25Q420.42 748.44 419.72 770.62" fill="none" stroke="#fff" stroke-width="1.7" stroke-opacity="0.375"/>
<path d="M413.88 238.12Q415.06 260.31 416.08 282.50M416.08 282.50Q417.11 304.69 417.97 326.88M421.87 681.88Q421.49 704.06 420.95 726.25" fill="none" stroke="#fff" stroke-width="1.7" stroke-opacity="0.500"/>
<path d="M417.97 326.88Q418.84 349.06 419.55 371.25M419.55 371.25Q420.27 393.44 420.82 415.62M422.48 637.50Q422.25 659.69 421.87 681.88" fill="none" stroke="#fff" stroke-width="1.7" stroke-opacity="0.625"/>
<path d="M420.82 415.62Q421.38 437.81 421.78 460.00M421.78 460.00Q422.18 482.19 422.42 504.38M422.42 504.38Q422.66 526.56 422.75 548.75M422.75 548.75Q422.84 570.94 422.77 593.12M422.77 593.12Q422.70 615.31 422.48 637.50" fill="none" stroke="#fff" stroke-width="1.7" stroke-opacity="0.750"/>
<path d="M437.55 105.00Q439.20 127.19 440.69 149.38M478.52 105.00Q480.17 127.19 481.66 149.38M487.74 105.00Q489.39 127.19 490.88 149.38M495.65 105.00Q497.30 127.19 498.80 149.38M519.29 105.00Q520.95 127.19 522.44 149.38M537.73 105.00Q539.38 127.19 540.87 149.38M626.39 105.00Q628.05 127.19 629.54 149.38M639.80 770.62Q639.04 792.81 638.12 815.00M645.09 770.62Q644.33 792.81 643.40 815.00" fill="none" stroke="#fff" stroke-width="2.1" stroke-opacity="0.125"/>
<path d="M428.33 105.00Q429.98 127.19 431.47 149.38M440.69 149.38Q442.18 171.56 443.52 193.75M481.66 149.38Q483.16 171.56 484.49 193.75M492.56 770.62Q491.84 792.81 490.97 815.00M490.88 149.38Q492.38 171.56 493.71 193.75M501.73 770.62Q501.02 792.81 500.14 815.00M509.62 770.62Q508.90 792.81 508.02 815.00M511.68 105.00Q513.33 127.19 514.83 149.38M525.58 770.62Q524.85 792.81 523.97 815.00M522.44 149.38Q523.93 171.56 525.27 193.75M533.16 770.62Q532.43 792.81 531.55 815.00M540.87 149.38Q542.37 171.56 543.70 193.75M551.52 770.62Q550.78 792.81 549.89 815.00M565.18 105.00Q566.83 127.19 568.33 149.38M578.85 770.62Q578.11 792.81 577.21 815.00M581.21 105.00Q582.86 127.19 584.36 149.38M594.81 770.62Q594.07 792.81 593.16 815.00M629.54 149.38Q631.04 171.56 632.37 193.75M641.16 726.25Q640.56 748.44 639.80 770.62M631.70 105.00Q633.36 127.19 634.85 149.38" fill="none" stroke="#fff" stroke-width="2.1" stroke-opacity="0.250"/>
<path d="M431.47 149.38Q432.97 171.56 434.30 193.75M442.57 770.62Q441.87 792.81 441.01 815.00M443.52 193.75Q444.86 215.94 446.03 238.12M451.75 770.62Q451.05 792.81 450.19 815.00M484.49 193.75Q485.83 215.94 487.01 238.12M493.83 726.25Q493.27 748.44 492.56 770.62M493.71 193.75Q495.05 215.94 496.22 238.12M503.01 726.25Q502.45 748.44 501.73 770.62M498.80 149.38Q500.29 171.56 501.63 193.75M501.63 193.75Q502.96 215.94 504.14 238.12M510.90 726.25Q510.34 748.44 509.62 770.62M514.83 149.38Q516.32 171.56 517.65 193.75M526.87 726.25Q526.30 748.44 525.58 770.62M525.27 193.75Q526.60 215.94 527.78 238.12M534.46 726.25Q533.89 748.44 533.16 770.62M543.70 193.75Q545.04 215.94 546.21 238.12M552.83 726.25Q552.25 748.44 551.52 770.62M568.33 149.38Q569.82 171.56 571.15 193.75M580.18 726.25Q579.59 748.44 578.85 770.62M584.36 149.38Q585.85 171.56 587.18 193.75M596.15 726.25Q595.56 748.44 594.81 770.62M632.37 193.75Q633.70 215.94 634.87 238.12M634.85 149.38Q636.35 171.56 637.68 193.75M646.45 726.25Q645.85 748.44 645.09 770.62" fill="none" stroke="#fff" stroke-width="2.1" stroke-opacity="0.375"/>
<path d="M434.30 193.75Q435.64 215.94 436.82 238.12M443.81 726.25Q443.27 748.44 442.57 770.62M446.03 238.12Q447.21 260.31 448.24 282.50M453.00 726.25Q452.45 748.44 451.75 770.62M487.01 238.12Q488.18 260.31 489.20 282.50M494.79 681.88Q494.39 704.06 493.83 726.25M496.22 238.12Q497.40 260.31 498.42 282.50M503.98 681.88Q503.57 704.06 503.01 726.25M504.14 238.12Q505.31 260.31 506.33 282.50M511.87 681.88Q511.46 704.06 510.90 726.25M517.65 193.75Q518.99 215.94 520.17 238.12M527.78 238.12Q528.96 260.31 529.97 282.50M535.44 681.88Q535.03 704.06 534.46 726.25M546.21 238.12Q547.39 260.31 548.41 282.50M553.82 681.88Q553.40 704.06 552.83 726.25M571.15 193.75Q572.49 215.94 573.66 238.12M581.18 681.88Q580.76 704.06 580.18 726.25M587.18 193.75Q588.52 215.94 589.69 238.12M597.16 681.88Q596.73 704.06 596.15 726.25M634.87 238.12Q636.05 260.31 637.06 282.50M642.20 681.88Q641.76 704.06 641.16 726.25M637.68 193.75Q639.01 215.94 640.18 238.12M647.50 681.88Q647.06 704.06 646.45 726.25" fill="none" stroke="#fff" stroke-width="2.1" stroke-opacity="0.500"/>
<path d="M436.82 238.12Q438.00 260.31 439.02 282.50M439.02 282.50Q440.04 304.69 440.91 326.88M444.74 681.88Q444.36 704.06 443.81 726.25M448.24 282.50Q449.26 304.69 450.12 326.88M454.56 637.50Q454.32 659.69 453.93 681.88M453.93 681.88Q453.54 704.06 453.00 726.25M489.20 282.50Q490.22 304.69 491.09 326.88M491.09 326.88Q491.95 349.06 492.65 371.25M495.43 637.50Q495.19 659.69 494.79 681.88M498.42 282.50Q499.44 304.69 500.30 326.88M500.30 326.88Q501.16 349.06 501.87 371.25M504.62 637.50Q504.38 659.69 503.98 681.88M506.33 282.50Q507.35 304.69 508.21 326.88M512.52 637.50Q512.27 659.69 511.87 681.88M520.17 238.12Q521.34 260.31 522.36 282.50M522.36 282.50Q523.38 304.69 524.24 326.88M527.85 681.88Q527.44 704.06 526.87 726.25M529.97 282.50Q530.99 304.69 531.85 326.88M531.85 326.88Q532.71 349.06 533.41 371.25M536.45 593.12Q536.35 615.31 536.10 637.50M536.10 637.50Q535.85 659.69 535.44 681.88M548.41 282.50Q549.42 304.69 550.28 326.88M554.49 637.50Q554.23 659.69 553.82 681.88M573.66 238.12Q574.84 260.31 575.85 282.50M589.69 238.12Q590.87 260.31 591.88 282.50M591.88 282.50Q592.89 304.69 593.75 326.88M597.86 637.50Q597.59 659.69 597.16 681.88M637.06 282.50Q638.07 304.69 638.92 326.88M643.32 593.12Q643.20 615.31 642.92 637.50M642.92 637.50Q642.64 659.69 642.20 681.88M640.18 238.12Q641.36 260.31 642.37 282.50M648.22 637.50Q647.94 659.69 647.50 681.88" fill="none" stroke="#fff" stroke-width="2.1" stroke-opacity="0.625"/>
<path d="M440.91 326.88Q441.78 349.06 442.49 371.25M445.36 637.50Q445.13 659.69 444.74 681.88M450.12 326.88Q450.99 349.06 451.70 371.25M451.70 371.25Q452.41 393.44 452.96 415.62M454.86 593.12Q454.79 615.31 454.56 637.50M492.65 371.25Q493.36 393.44 493.91 415.62M493.91 415.62Q494.45 437.81 494.84 460.00M495.77 548.75Q495.84 570.94 495.75 593.12M495.75 593.12Q495.67 615.31 495.43 637.50M501.87 371.25Q502.57 393.44 503.12 415.62M503.12 415.62Q503.66 437.81 504.05 460.00M504.97 548.75Q505.04 570.94 504.95 593.12M504.95 593.12Q504.87 615.31 504.62 637.50M508.21 326.88Q509.07 349.06 509.78 371.25M509.78 371.25Q510.48 393.44 511.02 415.62M512.85 593.12Q512.76 615.31 512.52 637.50M524.24 326.88Q525.10 349.06 525.80 371.25M528.85 593.12Q528.76 615.31 528.51 637.50M528.51 637.50Q528.26 659.69 527.85 681.88M533.41 371.25Q534.11 393.44 534.65 415.62M534.65 415.62Q535.19 437.81 535.58 460.00M535.58 460.00Q535.96 482.19 536.18 504.38M536.18 504.38Q536.41 526.56 536.47 548.75M536.47 548.75Q536.54 570.94 536.45 593.12M550.28 326.88Q551.14 349.06 551.83 371.25M551.83 371.25Q552.53 393.44 553.07 415.62M554.84 593.12Q554.74 615.31 554.49 637.50M575.85 282.50Q576.87 304.69 577.72 326.88M577.72 326.88Q578.58 349.06 579.27 371.25M581.87 637.50Q581.60 659.69 581.18 681.88M593.75 326.88Q594.60 349.06 595.29 371.25M598.23 593.12Q598.12 615.31 597.86 637.50M638.92 326.88Q639.77 349.06 640.46 371.25M640.46 371.25Q641.14 393.44 641.67 415.62M643.39 548.75Q643.43 570.94 643.32 593.12M642.37 282.50Q643.38 304.69 644.23 326.88M644.23 326.88Q645.08 349.06 645.76 371.25M648.61 593.12Q648.50 615.31 648.22 637.50" fill="none" stroke="#fff" stroke-width="2.1" stroke-opacity="0.750"/>
<path d="M442.49 371.25Q443.19 393.44 443.75 415.62M443.75 415.62Q444.30 437.81 444.70 460.00M445.66 548.75Q445.74 570.94 445.67 593.12M445.67 593.12Q445.59 615.31 445.36 637.50M452.96 415.62Q453.51 437.81 453.91 460.00M453.91 460.00Q454.30 482.19 454.54 504.38M454.54 504.38Q454.78 526.56 454.86 548.75M454.86 548.75Q454.94 570.94 454.86 593.12M494.84 460.00Q495.23 482.19 495.46 504.38M495.46 504.38Q495.69 526.56 495.77 548.75M504.05 460.00Q504.44 482.19 504.67 504.38M504.67 504.38Q504.90 526.56 504.97 548.75M511.02 415.62Q511.57 437.81 511.96 460.00M511.96 460.00Q512.34 482.19 512.57 504.38M512.57 504.38Q512.80 526.56 512.87 548.75M512.87 548.75Q512.94 570.94 512.85 593.12M525.80 371.25Q526.50 393.44 527.04 415.62M527.04 415.62Q527.59 437.81 527.97 460.00M528.87 548.75Q528.94 570.94 528.85 593.12M553.07 415.62Q553.61 437.81 553.99 460.00M553.99 460.00Q554.37 482.19 554.59 504.38M554.59 504.38Q554.81 526.56 554.88 548.75M554.88 548.75Q554.94 570.94 554.84 593.12M579.27 371.25Q579.97 393.44 580.50 415.62M582.28 548.75Q582.34 570.94 582.23 593.12M582.23 593.12Q582.13 615.31 581.87 637.50M595.29 371.25Q595.99 393.44 596.52 415.62M596.52 415.62Q597.06 437.81 597.43 460.00M598.02 504.38Q598.23 526.56 598.28 548.75M598.28 548.75Q598.34 570.94 598.23 593.12M641.67 415.62Q642.20 437.81 642.57 460.00M642.57 460.00Q642.93 482.19 643.14 504.38M643.14 504.38Q643.34 526.56 643.39 548.75M645.76 371.25Q646.45 393.44 646.98 415.62M648.69 548.75Q648.73 570.94 648.61 593.12" fill="none" stroke="#fff" stroke-width="2.1" stroke-opacity="0.875"/>
<path d="M444.70 460.00Q445.09 482.19 445.33 504.38M445.33 504.38Q445.57 526.56 445.66 548.75M527.97 460.00Q528.35 482.19 528.58 504.38M528.58 504.38Q528.80 526.56 528.87 548.75M580.50 415.62Q581.04 437.81 581.42 460.00M581.42 460.00Q581.79 482.19 582.01 504.38M582.01 504.38Q582.22 526.56 582.28 548.75M597.43 460.00Q597.80 482.19 598.02 504.38M646.98 415.62Q647.51 437.81 647.87 460.00M647.87 460.00Q648.24 482.19 648.44 504.38M648.44 504.38Q648.65 526.56 648.69 548.75" fill="none" stroke="#fff" stroke-width="2.1" stroke-opacity="1.000"/>
</g>
<g shape-rendering="crispEdges"><rect x="467" y="517" width="2" height="2" fill="#ffff00"/><rect x="327" y="575" width="2" height="2" fill="#ffc000"/><rect x="541" y="382" width="2" height="1" fill="#ffc000"/><rect x="480" y="538" width="2" height="2" fill="#ffff00"/><rect x="441" y="285" width="2" height="1" fill="#fff"/><rect x="403" y="393" width="3" height="1" fill="#ffc000"/><rect x="655" y="605" width="2" height="1" fill="#fff"/><rect x="385" y="236" width="2" height="2" fill="#fff"/><rect x="403" y="240" width="3" height="1" fill="#ffc000"/><rect x="418" y="537" width="2" height="2" fill="#fff"/><rect x="444" y="668" width="1" height="1" fill="#ffc000"/><rect x="327" y="554" width="2" height="1" fill="#fff"/><rect x="512" y="190" width="3" height="1" fill="#fff"/><rect x="642" y="486" width="2" height="2" fill="#fff"/><rect x="529" y="375" width="2" height="1" fill="#ffff00"/><rect x="473" y="193" width="2" height="1" fill="#ffc000"/><rect x="340" y="173" width="2" height="2" fill="#ffff00"/><rect x="313" y="225" width="3" height="1" fill="#fff"/><rect x="411" y="641" width="3" height="1" fill="#ffff00"/><rect x="430" y="745" width="2" height="2" fill="#ffff00"/><rect x="654" y="678" width="2" height="2" fill="#fff"/><rect x="376" y="672" width="1" height="1" fill="#ffff00"/><rect x="472" y="663" width="2" height="2" fill="#ffff00"/><rect x="640" y="801" width="2" height="1" fill="#fff"/><rect x="374" y="271" width="3" height="2" fill="#ffc000"/><rect x="475" y="698" width="1" height="1" fill="#fff"/><rect x="571" y="657" width="2" height="2" fill="#fff"/><rect x="586" y="344" width="2" height="2" fill="#ffc000"/><rect x="560" y="772" width="1" height="1" fill="#fff"/><rect x="470" y="524" width="2" height="1" fill="#ffc000"/><rect x="351" y="495" width="3" height="2" fill="#fff"/><rect x="458" y="763" width="1" height="1" fill="#fff"/><rect x="479" y="261" width="3" height="1" fill="#ffff00"/><rect x="327" y="694" width="3" height="2" fill="#ffc000"/><rect x="629" y="406" width="3" height="2" fill="#fff"/><rect x="455" y="126" width="2" height="1" fill="#fff"/><rect x="519" y="212" width="2" height="2" fill="#fff"/><rect x="502" y="474" width="2" height="1" fill="#fff"/><rect x="575" y="306" width="1" height="1" fill="#fff"/><rect x="647" y="340" width="2" height="2" fill="#ffff00"/><rect x="475" y="484" width="3" height="1" fill="#ffff00"/><rect x="354" y="698" width="2" height="1" fill="#ffc000"/><rect x="387" y="163" width="2" height="1" fill="#fff"/><rect x="359" y="737" width="2" height="1" fill="#fff"/><rect x="382" y="786" width="2" height="1" fill="#ffc000"/><rect x="597" y="802" width="3" height="1" fill="#ffc000"/><rect x="374" y="349" width="2" height="1" fill="#fff"/><rect x="466" y="348" width="2" height="2" fill="#ffc000"/><rect x="487" y="547" width="2" height="1" fill="#fff"/><rect x="398" y="172" width="2" height="1" fill="#ffff00"/><rect x="544" y="704" width="2" height="2" fill="#ffc000"/><rect x="506" y="753" width="2" height="1" fill="#fff"/><rect x="370" y="670" width="1" height="2" fill="#ffff00"/><rect x="394" y="175" width="2" height="1" fill="#fff"/><rect x="425" y="429" width="3" height="1" fill="#ffff00"/><rect x="547" y="143" width="2" height="1" fill="#fff"/><rect x="628" y="239" width="2" height="1" fill="#fff"/><rect x="368" y="461" width="2" height="1" fill="#fff"/><rect x="554" y="124" width="2" height="1" fill="#ffc000"/><rect x="587" y="187" width="3" height="1" fill="#ffc000"/><rect x="413" y="788" width="2" height="1" fill="#fff"/><rect x="555" y="692" width="2" height="1" fill="#ffc000"/><rect x="310" y="696" width="2" height="1" fill="#ffc000"/><rect x="594" y="172" width="2" height="1" fill="#fff"/><rect x="361" y="433" width="2" height="1" fill="#fff"/><rect x="647" y="782" width="1" height="1" fill="#fff"/><rect x="369" y="265" width="1" height="1" fill="#ffc000"/><rect x="535" y="307" width="1" height="1" fill="#fff"/><rect x="356" y="682" width="1" height="1" fill="#ffc000"/><rect x="387" y="325" width="2" height="2" fill="#ffc000"/><rect x="357" y="798" width="3" height="2" fill="#fff"/><rect x="553" y="412" width="3" height="2" fill="#fff"/><rect x="551" y="588" width="1" height="1" fill="#fff"/><rect x="429" y="206" width="2" height="2" fill="#ffc000"/><rect x="311" y="148" width="2" height="1" fill="#ffc000"/><rect x="330" y="431" width="2" height="1" fill="#fff"/><rect x="605" y="676" width="2" height="2" fill="#fff"/><rect x="469" y="565" width="2" height="2" fill="#fff"/><rect x="321" y="313" width="3" height="1" fill="#fff"/><rect x="534" y="344" width="1" height="1" fill="#fff"/><rect x="397" y="155" width="2" height="1" fill="#fff"/><rect x="406" y="606" width="1" height="2" fill="#ffc000"/><rect x="645" y="252" width="2" height="1" fill="#fff"/><rect x="479" y="166" width="2" height="1" fill="#ffff00"/><rect x="633" y="751" width="2" height="2" fill="#fff"/><rect x="643" y="478" width="1" height="2" fill="#ffff00"/><rect x="480" y="367" width="1" height="1" fill="#ffc000"/><rect x="472" y="115" width="2" height="2" fill="#ffc000"/><rect x="424" y="211" width="2" height="1" fill="#fff"/><rect x="424" y="339" width="2" height="2" fill="#fff"/><rect x="556" y="121" width="1" height="1" fill="#ffff00"/><rect x="612" y="385" width="2" height="1" fill="#ffff00"/><rect x="404" y="708" width="2" height="1" fill="#ffff00"/><rect x="458" y="789" width="2" height="1" fill="#fff"/><rect x="592" y="728" width="1" height="1" fill="#fff"/><rect x="450" y="763" width="2" height="1" fill="#ffff00"/><rect x="499" y="748" width="2" height="1" fill="#ffc000"/><rect x="395" y="309" width="2" height="1" fill="#ffc000"/><rect x="542" y="449" width="2" height="1" fill="#fff"/><rect x="620" y="258" width="2" height="1" fill="#fff"/><rect x="463" y="807" width="2" height="1" fill="#fff"/><rect x="498" y="235" width="2" height="1" fill="#fff"/><rect x="377" y="676" width="2" height="1" fill="#ffc000"/><rect x="380" y="632" width="1" height="1" fill="#ffff00"/><rect x="644" y="306" width="1" height="1" fill="#fff"/><rect x="441" y="737" width="2" height="1" fill="#ffc000"/><rect x="452" y="202" width="1" height="1" fill="#ffc000"/><rect x="632" y="385" width="2" height="1" fill="#ffc000"/><rect x="358" y="269" width="1" height="2" fill="#ffc000"/><rect x="305" y="654" width="3" height="1" fill="#fff"/><rect x="413" y="562" width="3" height="2" fill="#ffff00"/><rect x="575" y="417" width="2" height="2" fill="#fff"/><rect x="372" y="770" width="3" height="1" fill="#fff"/><rect x="407" y="120" width="2" height="2" fill="#ffff00"/><rect x="391" y="697" width="1" height="1" fill="#fff"/><rect x="414" y="603" width="2" height="2" fill="#fff"/><rect x="334" y="563" width="2" height="1" fill="#ffc000"/><rect x="552" y="456" width="2" height="1" fill="#ffff00"/><rect x="404" y="118" width="2" height="1" fill="#fff"/><rect x="593" y="330" width="2" height="1" fill="#ffc000"/><rect x="410" y="642" width="2" height="1" fill="#fff"/><rect x="540" y="403" width="1" height="1" fill="#ffc000"/><rect x="508" y="129" width="1" height="1" fill="#fff"/><rect x="622" y="387" width="1" height="1" fill="#fff"/><rect x="370" y="342" width="2" height="2" fill="#fff"/><rect x="603" y="618" width="2" height="1" fill="#ffc000"/><rect x="400" y="115" width="1" height="2" fill="#ffc000"/><rect x="378" y="784" width="2" height="1" fill="#ffff00"/><rect x="467" y="147" width="2" height="1" fill="#ffc000"/><rect x="621" y="367" width="2" height="2" fill="#ffc000"/><rect x="319" y="647" width="1" height="1" fill="#ffc000"/><rect x="566" y="292" width="2" height="1" fill="#ffff00"/><rect x="522" y="780" width="2" height="1" fill="#ffff00"/><rect x="561" y="116" width="2" height="1" fill="#fff"/><rect x="644" y="444" width="2" height="1" fill="#ffff00"/><rect x="476" y="205" width="2" height="2" fill="#ffff00"/><rect x="605" y="277" width="3" height="1" fill="#ffff00"/><rect x="444" y="469" width="2" height="1" fill="#fff"/><rect x="476" y="565" width="2" height="1" fill="#fff"/><rect x="398" y="801" width="1" height="1" fill="#fff"/><rect x="557" y="460" width="2" height="1" fill="#fff"/><rect x="524" y="403" width="2" height="1" fill="#fff"/><rect x="399" y="307" width="2" height="1" fill="#ffff00"/><rect x="391" y="285" width="3" height="1" fill="#ffff00"/><rect x="444" y="340" width="1" height="2" fill="#fff"/><rect x="318" y="436" width="2" height="1" fill="#ffc000"/><rect x="319" y="749" width="1" height="1" fill="#fff"/><rect x="643" y="245" width="2" height="2" fill="#fff"/><rect x="464" y="716" width="1" height="2" fill="#fff"/><rect x="525" y="528" width="2" height="1" fill="#fff"/><rect x="375" y="211" width="3" height="2" fill="#fff"/><rect x="377" y="567" width="2" height="2" fill="#ffff00"/><rect x="524" y="372" width="1" height="1" fill="#fff"/><rect x="327" y="494" width="3" height="1" fill="#ffc000"/><rect x="337" y="558" width="2" height="1" fill="#ffc000"/><rect x="539" y="801" width="2" height="2" fill="#fff"/><rect x="432" y="507" width="2" height="2" fill="#fff"/><rect x="558" y="250" width="2" height="1" fill="#fff"/><rect x="595" y="408" width="2" height="1" fill="#ffff00"/><rect x="323" y="203" width="1" height="2" fill="#ffc000"/><rect x="437" y="546" width="2" height="1" fill="#fff"/><rect x="364" y="226" width="2" height="1" fill="#fff"/><rect x="586" y="637" width="2" height="1" fill="#ffff00"/><rect x="474" y="792" width="1" height="2" fill="#ffc000"/><rect x="598" y="545" width="3" height="1" fill="#fff"/><rect x="375" y="541" width="3" height="1" fill="#fff"/><rect x="625" y="142" width="2" height="1" fill="#ffc000"/><rect x="641" y="217" width="3" height="2" fill="#fff"/><rect x="591" y="140" width="3" height="1" fill="#ffc000"/><rect x="528" y="496" width="2" height="2" fill="#ffc000"/><rect x="441" y="286" width="3" height="1" fill="#ffc000"/><rect x="306" y="237" width="2" height="1" fill="#ffc000"/><rect x="582" y="644" width="2" height="1" fill="#fff"/><rect x="349" y="188" width="1" height="1" fill="#ffff00"/><rect x="538" y="464" width="1" height="2" fill="#fff"/><rect x="558" y="331" width="3" height="1" fill="#fff"/><rect x="584" y="567" width="3" height="2" fill="#fff"/><rect x="344" y="595" width="2" height="1" fill="#ffc000"/><rect x="561" y="591" width="2" height="2" fill="#fff"/><rect x="361" y="639" width="2" height="1" fill="#ffc000"/><rect x="631" y="463" width="3" height="2" fill="#ffff00"/><rect x="435" y="278" width="2" height="1" fill="#fff"/><rect x="404" y="556" width="2" height="1" fill="#ffc000"/><rect x="488" y="193" width="3" height="2" fill="#ffc000"/><rect x="618" y="517" width="3" height="2" fill="#ffff00"/><rect x="566" y="709" width="2" height="1" fill="#ffff00"/><rect x="433" y="515" width="2" height="1" fill="#ffc000"/><rect x="645" y="541" width="2" height="2" fill="#ffff00"/><rect x="611" y="785" width="1" height="1" fill="#fff"/><rect x="518" y="217" width="3" height="1" fill="#ffc000"/><rect x="352" y="736" width="1" height="1" fill="#fff"/><rect x="425" y="115" width="3" height="1" fill="#ffff00"/><rect x="411" y="401" width="2" height="2" fill="#fff"/><rect x="361" y="690" width="2" height="1" fill="#fff"/><rect x="524" y="180" width="2" height="1" fill="#ffc000"/><rect x="585" y="152" width="3" height="2" fill="#ffc000"/><rect x="393" y="624" width="1" height="2" fill="#fff"/><rect x="368" y="131" width="1" height="1" fill="#fff"/><rect x="538" y="539" width="2" height="1" fill="#fff"/><rect x="533" y="474" width="3" height="1" fill="#fff"/><rect x="519" y="157" width="2" height="1" fill="#fff"/><rect x="470" y="632" width="2" height="1" fill="#fff"/><rect x="530" y="295" width="2" height="2" fill="#ffff00"/><rect x="522" y="150" width="2" height="2" fill="#ffff00"/><rect x="620" y="759" width="2" height="1" fill="#fff"/><rect x="602" y="743" width="2" height="1" fill="#fff"/><rect x="421" y="726" width="3" height="1" fill="#ffc000"/><rect x="493" y="442" width="2" height="2" fill="#fff"/><rect x="613" y="276" width="3" height="2" fill="#ffc000"/><rect x="617" y="167" width="1" height="1" fill="#fff"/><rect x="624" y="187" width="1" height="1" fill="#fff"/><rect x="541" y="142" width="1" height="1" fill="#fff"/><rect x="574" y="709" width="2" height="1" fill="#fff"/><rect x="376" y="285" width="1" height="2" fill="#fff"/><rect x="475" y="553" width="2" height="1" fill="#fff"/><rect x="454" y="335" width="2" height="1" fill="#ffff00"/><rect x="564" y="147" width="2" height="2" fill="#ffc000"/><rect x="585" y="632" width="3" height="1" fill="#ffc000"/><rect x="553" y="354" width="3" height="1" fill="#fff"/><rect x="305" y="232" width="1" height="1" fill="#ffff00"/><rect x="339" y="355" width="3" height="1" fill="#ffc000"/><rect x="486" y="779" width="2" height="2" fill="#ffff00"/><rect x="363" y="274" width="3" height="1" fill="#ffc000"/><rect x="431" y="550" width="1" height="1" fill="#ffc000"/><rect x="314" y="731" width="2" height="1" fill="#ffff00"/><rect x="482" y="740" width="2" height="1" fill="#fff"/><rect x="573" y="483" width="3" height="1" fill="#ffff00"/><rect x="613" y="476" width="2" height="1" fill="#ffff00"/><rect x="579" y="418" width="2" height="1" fill="#fff"/><rect x="552" y="560" width="2" height="2" fill="#ffff00"/><rect x="524" y="688" width="2" height="2" fill="#fff"/><rect x="362" y="476" width="2" height="2" fill="#fff"/><rect x="363" y="805" width="2" height="1" fill="#fff"/><rect x="584" y="798" width="2" height="1" fill="#ffc000"/><rect x="619" y="189" width="2" height="1" fill="#fff"/><rect x="441" y="137" width="3" height="2" fill="#fff"/><rect x="313" y="319" width="1" height="2" fill="#ffc000"/><rect x="603" y="282" width="3" height="1" fill="#fff"/><rect x="533" y="586" width="2" height="1" fill="#ffc000"/><rect x="340" y="550" width="2" height="2" fill="#fff"/><rect x="361" y="609" width="2" height="1" fill="#ffc000"/><rect x="450" y="546" width="1" height="1" fill="#ffff00"/><rect x="626" y="692" width="2" height="2" fill="#fff"/><rect x="554" y="265" width="1" height="2" fill="#ffff00"/><rect x="378" y="431" width="2" height="2" fill="#fff"/><rect x="566" y="352" width="2" height="1" fill="#fff"/><rect x="636" y="471" width="2" height="1" fill="#fff"/><rect x="327" y="379" width="2" height="2" fill="#ffc000"/><rect x="430" y="599" width="2" height="1" fill="#fff"/><rect x="639" y="629" width="2" height="1" fill="#ffc000"/><rect x="627" y="228" width="2" height="2" fill="#fff"/><rect x="385" y="504" width="2" height="1" fill="#ffff00"/><rect x="571" y="806" width="2" height="1" fill="#ffc000"/><rect x="437" y="299" width="2" height="1" fill="#ffc000"/><rect x="550" y="115" width="2" height="2" fill="#ffff00"/><rect x="473" y="323" width="2" height="1" fill="#fff"/><rect x="606" y="759" width="3" height="1" fill="#fff"/><rect x="355" y="659" width="1" height="1" fill="#fff"/><rect x="536" y="775" width="3" height="1" fill="#fff"/><rect x="371" y="708" width="2" height="1" fill="#ffff00"/><rect x="584" y="742" width="3" height="2" fill="#fff"/><rect x="375" y="697" width="2" height="2" fill="#fff"/><rect x="501" y="727" width="2" height="1" fill="#ffc000"/><rect x="502" y="442" width="2" height="2" fill="#ffc000"/><rect x="482" y="455" width="2" height="1" fill="#fff"/><rect x="482" y="597" width="2" height="1" fill="#ffc000"/><rect x="644" y="404" width="2" height="2" fill="#fff"/><rect x="312" y="563" width="1" height="2" fill="#ffff00"/><rect x="573" y="450" width="2" height="2" fill="#fff"/><rect x="350" y="402" width="2" height="1" fill="#ffff00"/><rect x="501" y="655" width="2" height="1" fill="#ffff00"/><rect x="501" y="407" width="2" height="1" fill="#ffff00"/><rect x="483" y="394" width="2" height="2" fill="#ffff00"/><rect x="347" y="456" width="2" height="1" fill="#ffff00"/><rect x="530" y="521" width="3" height="1" fill="#ffc000"/><rect x="323" y="493" width="1" height="1" fill="#fff"/><rect x="625" y="245" width="3" height="1" fill="#ffc000"/><rect x="552" y="549" width="1" height="2" fill="#fff"/><rect x="527" y="554" width="2" height="1" fill="#fff"/><rect x="341" y="406" width="2" height="1" fill="#ffff00"/><rect x="397" y="504" width="2" height="1" fill="#fff"/><rect x="456" y="335" width="3" height="2" fill="#ffc000"/><rect x="346" y="140" width="2" height="1" fill="#ffc000"/><rect x="436" y="123" width="2" height="2" fill="#ffc000"/><rect x="527" y="184" width="1" height="1" fill="#fff"/><rect x="537" y="116" width="2" height="1" fill="#fff"/><rect x="311" y="203" width="2" height="1" fill="#ffc000"/><rect x="568" y="368" width="2" height="2" fill="#fff"/><rect x="482" y="501" width="1" height="1" fill="#fff"/><rect x="607" y="155" width="2" height="1" fill="#ffc000"/><rect x="364" y="621" width="2" height="1" fill="#fff"/><rect x="561" y="773" width="2" height="1" fill="#fff"/><rect x="532" y="366" width="2" height="1" fill="#ffc000"/><rect x="581" y="771" width="2" height="1" fill="#ffff00"/><rect x="536" y="546" width="2" height="2" fill="#fff"/><rect x="512" y="693" width="2" height="2" fill="#ffc000"/><rect x="577" y="375" width="2" height="2" fill="#ffc000"/><rect x="394" y="114" width="3" height="1" fill="#fff"/><rect x="354" y="314" width="3" height="2" fill="#ffff00"/><rect x="482" y="654" width="2" height="1" fill="#ffc000"/><rect x="561" y="661" width="3" height="1" fill="#ffff00"/><rect x="470" y="585" width="3" height="1" fill="#ffff00"/><rect x="468" y="664" width="1" height="1" fill="#ffff00"/><rect x="489" y="390" width="2" height="2" fill="#ffff00"/><rect x="372" y="523" width="2" height="2" fill="#fff"/><rect x="507" y="315" width="3" height="1" fill="#ffc000"/><rect x="627" y="284" width="1" height="1" fill="#ffff00"/><rect x="585" y="553" width="3" height="1" fill="#ffff00"/><rect x="488" y="353" width="1" height="1" fill="#fff"/><rect x="609" y="802" width="2" height="1" fill="#fff"/><rect x="640" y="409" width="1" height="1" fill="#ffff00"/><rect x="368" y="253" width="1" height="1" fill="#fff"/><rect x="614" y="501" width="1" height="2" fill="#ffc000"/><rect x="633" y="558" width="2" height="2" fill="#ffff00"/><rect x="336" y="275" width="2" height="1" fill="#fff"/><rect x="388" y="371" width="1" height="1" fill="#fff"/><rect x="326" y="768" width="2" height="2" fill="#fff"/><rect x="535" y="607" width="1" height="1" fill="#fff"/><rect x="307" y="334" width="3" height="2" fill="#ffff00"/><rect x="536" y="420" width="2" height="1" fill="#ffff00"/><rect x="437" y="384" width="2" height="1" fill="#fff"/><rect x="629" y="675" width="2" height="1" fill="#ffc000"/><rect x="593" y="222" width="2" height="1" fill="#ffff00"/><rect x="630" y="780" width="1" height="1" fill="#fff"/><rect x="418" y="790" width="1" height="2" fill="#ffc000"/><rect x="422" y="368" width="2" height="2" fill="#fff"/><rect x="460" y="732" width="2" height="1" fill="#ffff00"/><rect x="314" y="285" width="2" height="1" fill="#ffff00"/><rect x="418" y="455" width="2" height="2" fill="#fff"/><rect x="611" y="153" width="2" height="1" fill="#ffc000"/><rect x="375" y="292" width="2" height="1" fill="#ffc000"/><rect x="339" y="757" width="2" height="1" fill="#ffc000"/><rect x="651" y="692" width="2" height="2" fill="#fff"/><rect x="354" y="350" width="2" height="1" fill="#ffff00"/><rect x="627" y="416" width="3" height="1" fill="#ffff00"/><rect x="367" y="209" width="2" height="2" fill="#fff"/><rect x="335" y="168" width="2" height="1" fill="#ffff00"/><rect x="536" y="208" width="2" height="1" fill="#ffff00"/><rect x="556" y="159" width="3" height="1" fill="#fff"/><rect x="601" y="346" width="1" height="1" fill="#fff"/><rect x="473" y="747" width="2" height="2" fill="#fff"/><rect x="435" y="692" width="3" height="2" fill="#ffff00"/><rect x="431" y="710" width="1" height="1" fill="#fff"/><rect x="595" y="610" width="3" height="1" fill="#ffc000"/><rect x="343" y="316" width="3" height="1" fill="#ffc000"/><rect x="496" y="482" width="1" height="1" fill="#fff"/><rect x="365" y="544" width="3" height="1" fill="#ffff00"/><rect x="620" y="127" width="1" height="2" fill="#ffff00"/><rect x="470" y="556" width="1" height="1" fill="#ffc000"/><rect x="558" y="718" width="1" height="1" fill="#ffff00"/><rect x="482" y="457" width="1" height="1" fill="#fff"/><rect x="353" y="395" width="2" height="2" fill="#fff"/><rect x="570" y="512" width="2" height="2" fill="#fff"/><rect x="602" y="406" width="1" height="1" fill="#ffc000"/><rect x="390" y="349" width="3" height="1" fill="#ffc000"/><rect x="605" y="680" width="3" height="1" fill="#ffff00"/><rect x="633" y="780" width="1" height="1" fill="#ffc000"/><rect x="369" y="189" width="2" height="2" fill="#ffc000"/><rect x="385" y="579" width="2" height="2" fill="#ffc000"/><rect x="639" y="146" width="3" height="1" fill="#fff"/><rect x="525" y="752" width="2" height="1" fill="#fff"/><rect x="459" y="475" width="1" height="1" fill="#ffff00"/><rect x="364" y="355" width="1" height="1" fill="#ffff00"/><rect x="636" y="524" width="3" height="1" fill="#fff"/><rect x="628" y="729" width="2" height="2" fill="#ffff00"/><rect x="492" y="174" width="2" height="1" fill="#fff"/><rect x="435" y="495" width="2" height="1" fill="#ffc000"/><rect x="419" y="135" width="3" height="1" fill="#ffc000"/><rect x="425" y="121" width="3" height="1" fill="#ffff00"/><rect x="406" y="455" width="1" height="1" fill="#ffff00"/><rect x="328" y="223" width="1" height="2" fill="#ffc000"/><rect x="460" y="383" width="2" height="1" fill="#fff"/><rect x="429" y="348" width="3" height="1" fill="#ffff00"/><rect x="569" y="627" width="2" height="1" fill="#ffff00"/><rect x="307" y="719" width="2" height="2" fill="#ffc000"/><rect x="599" y="217" width="2" height="1" fill="#fff"/><rect x="407" y="595" width="2" height="1" fill="#ffff00"/><rect x="516" y="479" width="2" height="1" fill="#fff"/><rect x="370" y="422" width="2" height="2" fill="#fff"/><rect x="387" y="375" width="3" height="1" fill="#ffff00"/><rect x="377" y="780" width="1" height="1" fill="#fff"/><rect x="618" y="292" width="3" height="2" fill="#ffff00"/><rect x="486" y="808" width="2" height="1" fill="#ffc000"/><rect x="536" y="141" width="1" height="2" fill="#fff"/><rect x="448" y="273" width="2" height="1" fill="#fff"/><rect x="461" y="452" width="2" height="1" fill="#fff"/><rect x="649" y="334" width="1" height="2" fill="#fff"/><rect x="548" y="736" width="3" height="1" fill="#fff"/><rect x="379" y="681" width="2" height="1" fill="#ffc000"/><rect x="519" y="552" width="2" height="1" fill="#fff"/><rect x="414" y="661" width="2" height="1" fill="#ffff00"/><rect x="542" y="521" width="2" height="2" fill="#fff"/><rect x="614" y="508" width="2" height="2" fill="#fff"/><rect x="359" y="198" width="1" height="1" fill="#fff"/><rect x="486" y="232" width="1" height="2" fill="#ffc000"/><rect x="567" y="122" width="2" height="1" fill="#fff"/><rect x="317" y="305" width="2" height="1" fill="#fff"/><rect x="441" y="426" width="2" height="2" fill="#fff"/><rect x="321" y="645" width="2" height="1" fill="#fff"/><rect x="622" y="144" width="1" height="1" fill="#ffff00"/><rect x="516" y="324" width="2" height="2" fill="#fff"/><rect x="558" y="384" width="2" height="1" fill="#ffc000"/><rect x="476" y="722" width="2" height="1" fill="#fff"/><rect x="371" y="362" width="3" height="1" fill="#ffc000"/><rect x="489" y="193" width="2" height="2" fill="#ffff00"/><rect x="347" y="159" width="2" height="1" fill="#fff"/><rect x="427" y="438" width="2" height="2" fill="#fff"/><rect x="579" y="131" width="1" height="1" fill="#fff"/><rect x="597" y="301" width="2" height="1" fill="#ffc000"/><rect x="427" y="224" width="3" height="1" fill="#ffc000"/><rect x="472" y="320" width="2" height="2" fill="#fff"/><rect x="549" y="204" width="3" height="1" fill="#ffc000"/><rect x="448" y="485" width="1" height="2" fill="#fff"/><rect x="497" y="470" width="1" height="2" fill="#ffc000"/><rect x="357" y="613" width="1" height="2" fill="#ffc000"/><rect x="600" y="236" width="1" height="1" fill="#fff"/><rect x="433" y="504" width="1" height="2" fill="#fff"/><rect x="384" y="330" width="2" height="1" fill="#ffc000"/><rect x="626" y="394" width="2" height="1" fill="#ffff00"/><rect x="587" y="368" width="1" height="2" fill="#ffc000"/><rect x="469" y="603" width="1" height="1" fill="#ffff00"/><rect x="400" y="316" width="2" height="1" fill="#fff"/><rect x="458" y="537" width="2" height="2" fill="#fff"/><rect x="411" y="140" width="3" height="1" fill="#fff"/><rect x="395" y="612" width="1" height="1" fill="#ffff00"/><rect x="580" y="694" width="3" height="2" fill="#fff"/><rect x="651" y="597" width="2" height="1" fill="#fff"/><rect x="428" y="654" width="2" height="2" fill="#ffc000"/><rect x="383" y="541" width="2" height="1" fill="#ffff00"/><rect x="548" y="760" width="2" height="1" fill="#fff"/><rect x="606" y="581" width="2" height="1" fill="#ffc000"/><rect x="595" y="776" width="3" height="1" fill="#fff"/><rect x="529" y="788" width="1" height="1" fill="#fff"/><rect x="450" y="362" width="2" height="1" fill="#ffff00"/><rect x="478" y="591" width="2" height="1" fill="#fff"/><rect x="463" y="472" width="2" height="2" fill="#ffff00"/><rect x="500" y="212" width="3" height="1" fill="#fff"/><rect x="365" y="642" width="2" height="1" fill="#ffc000"/><rect x="405" y="193" width="2" height="1" fill="#ffc000"/><rect x="401" y="155" width="2" height="1" fill="#fff"/><rect x="362" y="783" width="3" height="1" fill="#ffc000"/><rect x="500" y="314" width="2" height="1" fill="#fff"/><rect x="551" y="171" width="2" height="1" fill="#fff"/><rect x="583" y="453" width="2" height="1" fill="#fff"/><rect x="528" y="562" width="1" height="1" fill="#fff"/><rect x="314" y="633" width="2" height="1" fill="#fff"/><rect x="526" y="242" width="2" height="2" fill="#fff"/><rect x="440" y="542" width="2" height="1" fill="#ffff00"/><rect x="622" y="208" width="1" height="1" fill="#fff"/><rect x="581" y="188" width="2" height="1" fill="#fff"/><rect x="563" y="407" width="2" height="2" fill="#fff"/><rect x="353" y="271" width="1" height="1" fill="#fff"/><rect x="382" y="447" width="1" height="2" fill="#fff"/><rect x="583" y="708" width="2" height="1" fill="#fff"/><rect x="488" y="573" width="1" height="1" fill="#ffff00"/><rect x="629" y="119" width="2" height="1" fill="#fff"/><rect x="578" y="116" width="2" height="1" fill="#fff"/><rect x="488" y="491" width="2" height="2" fill="#fff"/><rect x="593" y="544" width="3" height="2" fill="#ffff00"/><rect x="505" y="320" width="2" height="1" fill="#ffc000"/><rect x="492" y="715" width="2" height="2" fill="#fff"/><rect x="550" y="628" width="3" height="2" fill="#ffff00"/><rect x="432" y="769" width="2" height="1" fill="#ffc000"/><rect x="367" y="193" width="2" height="1" fill="#fff"/><rect x="372" y="565" width="2" height="2" fill="#ffc000"/><rect x="497" y="432" width="2" height="2" fill="#fff"/><rect x="456" y="164" width="2" height="2" fill="#fff"/><rect x="365" y="386" width="1" height="1" fill="#ffc000"/><rect x="523" y="373" width="1" height="1" fill="#fff"/><rect x="544" y="142" width="2" height="1" fill="#ffc000"/><rect x="456" y="605" width="3" height="1" fill="#fff"/><rect x="612" y="752" width="2" height="2" fill="#ffff00"/><rect x="598" y="587" width="2" height="2" fill="#fff"/><rect x="641" y="626" width="3" height="1" fill="#fff"/><rect x="494" y="182" width="2" height="1" fill="#fff"/><rect x="549" y="360" width="1" height="1" fill="#ffc000"/><rect x="331" y="453" width="2" height="2" fill="#fff"/><rect x="613" y="761" width="3" height="1" fill="#fff"/><rect x="550" y="488" width="1" height="1" fill="#ffc000"/><rect x="358" y="351" width="1" height="1" fill="#fff"/><rect x="589" y="240" width="2" height="2" fill="#ffc000"/><rect x="444" y="701" width="2" height="2" fill="#ffff00"/><rect x="616" y="264" width="2" height="1" fill="#fff"/><rect x="423" y="619" width="2" height="1" fill="#ffc000"/><rect x="501" y="117" width="1" height="1" fill="#fff"/><rect x="654" y="433" width="2" height="1" fill="#fff"/><rect x="327" y="381" width="3" height="2" fill="#ffff00"/><rect x="645" y="481" width="2" height="1" fill="#fff"/><rect x="530" y="554" width="2" height="1" fill="#ffff00"/><rect x="413" y="587" width="3" height="2" fill="#ffff00"/><rect x="610" y="284" width="1" height="2" fill="#ffff00"/><rect x="419" y="348" width="2" height="1" fill="#ffff00"/><rect x="358" y="807" width="2" height="1" fill="#fff"/><rect x="506" y="423" width="3" height="1" fill="#fff"/><rect x="554" y="213" width="1" height="1" fill="#ffff00"/><rect x="333" y="519" width="3" height="1" fill="#ffff00"/><rect x="430" y="800" width="2" height="1" fill="#fff"/><rect x="402" y="739" width="2" height="2" fill="#fff"/><rect x="551" y="300" width="2" height="1" fill="#fff"/><rect x="515" y="252" width="2" height="2" fill="#fff"/><rect x="349" y="153" width="1" height="2" fill="#fff"/><rect x="353" y="350" width="3" height="2" fill="#ffff00"/><rect x="531" y="722" width="2" height="1" fill="#fff"/><rect x="315" y="717" width="3" height="2" fill="#ffc000"/><rect x="367" y="670" width="1" height="2" fill="#fff"/><rect x="581" y="540" width="2" height="1" fill="#ffff00"/><rect x="413" y="131" width="2" height="2" fill="#fff"/><rect x="601" y="607" width="1" height="1" fill="#fff"/><rect x="489" y="259" width="2" height="1" fill="#ffff00"/><rect x="544" y="352" width="2" height="2" fill="#ffff00"/><rect x="594" y="544" width="2" height="2" fill="#fff"/><rect x="652" y="651" width="2" height="2" fill="#ffff00"/><rect x="402" y="482" width="3" height="1" fill="#fff"/><rect x="583" y="182" width="2" height="1" fill="#fff"/><rect x="337" y="640" width="1" height="1" fill="#fff"/><rect x="378" y="491" width="3" height="1" fill="#ffff00"/><rect x="625" y="626" width="2" height="2" fill="#fff"/><rect x="648" y="282" width="2" height="1" fill="#fff"/><rect x="420" y="433" width="1" height="1" fill="#fff"/><rect x="629" y="674" width="2" height="2" fill="#fff"/><rect x="625" y="375" width="1" height="1" fill="#fff"/><rect x="546" y="127" width="2" height="1" fill="#fff"/><rect x="455" y="340" width="2" height="1" fill="#ffff00"/><rect x="582" y="796" width="2" height="1" fill="#ffff00"/><rect x="421" y="310" width="2" height="1" fill="#fff"/><rect x="517" y="588" width="3" height="1" fill="#fff"/><rect x="379" y="727" width="2" height="1" fill="#fff"/><rect x="354" y="416" width="1" height="1" fill="#fff"/><rect x="308" y="791" width="3" height="2" fill="#fff"/><rect x="569" y="358" width="1" height="1" fill="#ffc000"/><rect x="628" y="349" width="1" height="2" fill="#ffff00"/><rect x="581" y="276" width="2" height="2" fill="#fff"/><rect x="509" y="527" width="1" height="1" fill="#fff"/><rect x="343" y="158" width="3" height="1" fill="#fff"/><rect x="381" y="115" width="3" height="1" fill="#fff"/><rect x="644" y="697" width="2" height="1" fill="#ffff00"/><rect x="402" y="622" width="2" height="1" fill="#fff"/><rect x="320" y="161" width="3" height="1" fill="#ffc000"/><rect x="419" y="299" width="3" height="1" fill="#ffc000"/><rect x="550" y="495" width="2" height="1" fill="#ffc000"/><rect x="441" y="489" width="2" height="1" fill="#ffc000"/><rect x="623" y="672" width="3" height="2" fill="#fff"/><rect x="395" y="758" width="2" height="2" fill="#fff"/><rect x="595" y="194" width="2" height="2" fill="#fff"/><rect x="548" y="502" width="2" height="2" fill="#ffff00"/><rect x="558" y="114" width="3" height="2" fill="#ffff00"/><rect x="387" y="805" width="1" height="1" fill="#ffff00"/><rect x="398" y="792" width="3" height="2" fill="#fff"/><rect x="518" y="268" width="2" height="2" fill="#ffff00"/><rect x="512" y="355" width="1" height="2" fill="#fff"/><rect x="377" y="366" width="2" height="2" fill="#ffff00"/><rect x="590" y="233" width="1" height="1" fill="#fff"/><rect x="598" y="378" width="2" height="1" fill="#fff"/><rect x="438" y="602" width="3" height="2" fill="#ffff00"/><rect x="537" y="323" width="2" height="1" fill="#ffc000"/><rect x="465" y="597" width="3" height="1" fill="#fff"/><rect x="349" y="117" width="3" height="1" fill="#fff"/><rect x="589" y="477" width="3" height="1" fill="#fff"/><rect x="393" y="114" width="3" height="1" fill="#ffff00"/><rect x="395" y="751" width="1" height="2" fill="#ffc000"/><rect x="610" y="556" width="2" height="1" fill="#fff"/><rect x="437" y="543" width="2" height="1" fill="#ffc000"/><rect x="562" y="142" width="3" height="1" fill="#ffc000"/><rect x="441" y="358" width="3" height="1" fill="#fff"/><rect x="374" y="157" width="2" height="1" fill="#fff"/><rect x="451" y="387" width="3" height="2" fill="#fff"/><rect x="469" y="435" width="2" height="1" fill="#ffc000"/><rect x="460" y="733" width="3" height="1" fill="#fff"/><rect x="568" y="580" width="2" height="2" fill="#fff"/><rect x="441" y="343" width="1" height="1" fill="#fff"/><rect x="507" y="703" width="2" height="1" fill="#fff"/><rect x="381" y="703" width="2" height="2" fill="#fff"/><rect x="608" y="347" width="2" height="1" fill="#fff"/><rect x="356" y="720" width="3" height="1" fill="#fff"/><rect x="492" y="243" width="2" height="1" fill="#fff"/><rect x="605" y="290" width="1" height="1" fill="#ffc000"/><rect x="609" y="325" width="2" height="1" fill="#ffff00"/><rect x="377" y="205" width="2" height="2" fill="#ffc000"/><rect x="435" y="519" width="2" height="2" fill="#fff"/><rect x="323" y="500" width="3" height="1" fill="#fff"/><rect x="504" y="398" width="2" height="1" fill="#fff"/><rect x="408" y="667" width="2" height="2" fill="#ffc000"/><rect x="616" y="423" width="2" height="2" fill="#fff"/><rect x="352" y="200" width="2" height="1" fill="#ffc000"/><rect x="503" y="755" width="2" height="2" fill="#ffc000"/><rect x="571" y="614" width="2" height="2" fill="#fff"/><rect x="340" y="257" width="1" height="1" fill="#fff"/><rect x="538" y="402" width="2" height="1" fill="#ffc000"/><rect x="631" y="717" width="2" height="1" fill="#fff"/><rect x="387" y="317" width="2" height="1" fill="#fff"/><rect x="601" y="339" width="2" height="1" fill="#fff"/><rect x="360" y="341" width="3" height="2" fill="#fff"/><rect x="464" y="178" width="2" height="2" fill="#ffc000"/><rect x="319" y="392" width="2" height="2" fill="#fff"/><rect x="490" y="767" width="2" height="1" fill="#ffc000"/><rect x="481" y="635" width="2" height="1" fill="#fff"/><rect x="516" y="714" width="2" height="1" fill="#fff"/><rect x="617" y="302" width="1" height="2" fill="#ffff00"/><rect x="649" y="530" width="2" height="2" fill="#fff"/><rect x="365" y="322" width="2" height="1" fill="#ffc000"/><rect x="433" y="342" width="1" height="2" fill="#ffff00"/><rect x="339" y="502" width="3" height="1" fill="#fff"/><rect x="317" y="434" width="2" height="1" fill="#ffc000"/><rect x="430" y="515" width="2" height="1" fill="#fff"/><rect x="337" y="574" width="2" height="1" fill="#ffc000"/><rect x="342" y="295" width="2" height="1" fill="#fff"/><rect x="494" y="301" width="2" height="1" fill="#ffc000"/><rect x="320" y="509" width="2" height="1" fill="#ffff00"/><rect x="377" y="394" width="3" height="2" fill="#fff"/><rect x="338" y="280" width="2" height="2" fill="#fff"/><rect x="550" y="510" width="2" height="1" fill="#fff"/><rect x="658" y="698" width="3" height="2" fill="#ffc000"/><rect x="501" y="189" width="3" height="1" fill="#fff"/><rect x="513" y="276" width="1" height="2" fill="#fff"/><rect x="339" y="348" width="2" height="1" fill="#fff"/><rect x="565" y="171" width="2" height="1" fill="#fff"/><rect x="316" y="660" width="3" height="2" fill="#fff"/><rect x="581" y="229" width="2" height="1" fill="#fff"/><rect x="557" y="590" width="2" height="1" fill="#fff"/><rect x="581" y="459" width="2" height="2" fill="#fff"/><rect x="430" y="148" width="2" height="2" fill="#fff"/><rect x="639" y="226" width="2" height="2" fill="#fff"/><rect x="623" y="765" width="2" height="1" fill="#fff"/><rect x="583" y="687" width="1" height="1" fill="#fff"/><rect x="606" y="635" width="3" height="1" fill="#fff"/><rect x="617" y="504" width="2" height="2" fill="#ffc000"/><rect x="640" y="588" width="1" height="1" fill="#ffc000"/><rect x="602" y="567" width="2" height="1" fill="#ffc000"/><rect x="517" y="322" width="2" height="1" fill="#ffc000"/><rect x="468" y="534" width="1" height="1" fill="#fff"/><rect x="469" y="387" width="2" height="1" fill="#ffff00"/><rect x="371" y="804" width="3" height="1" fill="#ffc000"/><rect x="540" y="197" width="2" height="1" fill="#ffc000"/><rect x="640" y="302" width="2" height="1" fill="#fff"/><rect x="520" y="732" width="2" height="1" fill="#ffff00"/><rect x="483" y="778" width="2" height="2" fill="#fff"/><rect x="595" y="119" width="2" height="2" fill="#fff"/><rect x="394" y="676" width="3" height="2" fill="#fff"/><rect x="487" y="713" width="2" height="2" fill="#fff"/><rect x="487" y="403" width="2" height="1" fill="#ffc000"/><rect x="538" y="365" width="2" height="1" fill="#fff"/><rect x="649" y="366" width="3" height="1" fill="#fff"/><rect x="571" y="425" width="1" height="1" fill="#ffc000"/><rect x="308" y="449" width="2" height="2" fill="#fff"/><rect x="484" y="752" width="3" height="2" fill="#fff"/><rect x="525" y="797" width="3" height="1" fill="#ffff00"/><rect x="651" y="406" width="2" height="2" fill="#ffc000"/><rect x="623" y="364" width="3" height="1" fill="#fff"/><rect x="586" y="688" width="2" height="2" fill="#fff"/><rect x="327" y="675" width="2" height="1" fill="#fff"/><rect x="650" y="522" width="2" height="1" fill="#fff"/><rect x="473" y="733" width="2" height="1" fill="#ffc000"/><rect x="434" y="587" width="2" height="1" fill="#ffc000"/><rect x="624" y="191" width="2" height="1" fill="#ffc000"/><rect x="400" y="144" width="1" height="1" fill="#ffc000"/><rect x="558" y="386" width="1" height="1" fill="#ffff00"/><rect x="309" y="426" width="3" height="1" fill="#ffff00"/><rect x="390" y="298" width="3" height="2" fill="#fff"/><rect x="600" y="690" width="2" height="2" fill="#ffff00"/><rect x="556" y="236" width="2" height="2" fill="#ffc000"/><rect x="446" y="697" width="2" height="1" fill="#ffff00"/><rect x="356" y="609" width="2" height="1" fill="#ffff00"/><rect x="328" y="349" width="3" height="1" fill="#fff"/><rect x="541" y="706" width="2" height="2" fill="#ffc000"/><rect x="584" y="620" width="2" height="2" fill="#fff"/><rect x="389" y="704" width="1" height="2" fill="#ffff00"/><rect x="632" y="788" width="2" height="2" fill="#ffff00"/><rect x="555" y="603" width="3" height="2" fill="#fff"/><rect x="402" y="687" width="2" height="1" fill="#fff"/><rect x="505" y="363" width="1" height="2" fill="#ffff00"/><rect x="348" y="473" width="1" height="1" fill="#fff"/><rect x="354" y="551" width="2" height="2" fill="#fff"/><rect x="592" y="499" width="1" height="1" fill="#ffc000"/><rect x="524" y="269" width="3" height="2" fill="#ffff00"/><rect x="499" y="273" width="3" height="2" fill="#ffff00"/><rect x="384" y="609" width="3" height="1" fill="#fff"/><rect x="327" y="408" width="3" height="1" fill="#fff"/><rect x="486" y="391" width="1" height="1" fill="#fff"/><rect x="421" y="782" width="2" height="2" fill="#fff"/><rect x="462" y="206" width="2" height="2" fill="#fff"/><rect x="445" y="245" width="1" height="2" fill="#fff"/><rect x="311" y="738" width="2" height="1" fill="#fff"/><rect x="554" y="503" width="3" height="2" fill="#fff"/><rect x="425" y="124" width="3" height="1" fill="#fff"/><rect x="528" y="501" width="2" height="1" fill="#ffff00"/><rect x="365" y="144" width="1" height="2" fill="#ffc000"/><rect x="341" y="430" width="2" height="1" fill="#fff"/><rect x="334" y="451" width="2" height="1" fill="#ffff00"/><rect x="492" y="705" width="2" height="1" fill="#ffc000"/><rect x="312" y="288" width="3" height="1" fill="#ffff00"/><rect x="562" y="652" width="2" height="1" fill="#ffc000"/><rect x="378" y="122" width="1" height="1" fill="#fff"/><rect x="320" y="436" width="2" height="2" fill="#ffff00"/><rect x="469" y="502" width="2" height="1" fill="#fff"/><rect x="440" y="743" width="3" height="1" fill="#fff"/><rect x="460" y="771" width="3" height="2" fill="#fff"/><rect x="611" y="614" width="2" height="2" fill="#ffc000"/><rect x="551" y="565" width="1" height="1" fill="#fff"/><rect x="327" y="530" width="1" height="1" fill="#fff"/><rect x="570" y="507" width="2" height="1" fill="#fff"/></g>
<defs><radialGradient id="glw"><stop offset="0" stop-color="#fff"/><stop offset="0.35" stop-color="#ffff60"/><stop offset="0.7" stop-color="#ffb000" stop-opacity="0.7"/><stop offset="1" stop-color="#ff4000" stop-opacity="0"/></radialGradient><radialGradient id="glo"><stop offset="0" stop-color="#ffa000" stop-opacity="0.9"/><stop offset="1" stop-color="#ff3000" stop-opacity="0"/></radialGradient></defs>
<ellipse cx="310" cy="719" rx="9" ry="24" fill="url(#glo)"/>
<line x1="347.5" y1="120.0" x2="348.5" y2="150.0" stroke="#ffb000" stroke-width="3.0" stroke-opacity="0.35"/>
<line x1="347.5" y1="120.0" x2="348.5" y2="150.0" stroke="#ffff90" stroke-width="1.0" stroke-opacity="0.9"/>
<line x1="351.0" y1="166.0" x2="357.4" y2="234.0" stroke="#ffb000" stroke-width="3.3" stroke-opacity="0.35"/>
<line x1="351.0" y1="166.0" x2="357.4" y2="234.0" stroke="#ffff90" stroke-width="1.1" stroke-opacity="0.9"/>
<line x1="358.0" y1="250.0" x2="361.0" y2="300.0" stroke="#ffb000" stroke-width="2.7" stroke-opacity="0.35"/>
<line x1="358.0" y1="250.0" x2="361.0" y2="300.0" stroke="#ffff90" stroke-width="0.9" stroke-opacity="0.9"/>
<line x1="375.5" y1="420.0" x2="377.0" y2="458.0" stroke="#ffb000" stroke-width="3.0" stroke-opacity="0.35"/>
<line x1="375.5" y1="420.0" x2="377.0" y2="458.0" stroke="#ffff90" stroke-width="1.0" stroke-opacity="0.9"/>
<line x1="338.5" y1="560.0" x2="339.5" y2="640.0" stroke="#ffb000" stroke-width="3.3" stroke-opacity="0.35"/>
<line x1="338.5" y1="560.0" x2="339.5" y2="640.0" stroke="#ffff90" stroke-width="1.1" stroke-opacity="0.9"/>
<line x1="326.0" y1="615.0" x2="327.0" y2="670.0" stroke="#ffb000" stroke-width="3.3" stroke-opacity="0.35"/>
<line x1="326.0" y1="615.0" x2="327.0" y2="670.0" stroke="#ffff90" stroke-width="1.1" stroke-opacity="0.9"/>
<line x1="353.5" y1="700.0" x2="354.5" y2="770.0" stroke="#ffb000" stroke-width="3.0" stroke-opacity="0.35"/>
<line x1="353.5" y1="700.0" x2="354.5" y2="770.0" stroke="#ffff90" stroke-width="1.0" stroke-opacity="0.9"/>
<line x1="352.5" y1="770.0" x2="352.5" y2="808.0" stroke="#ffb000" stroke-width="3.0" stroke-opacity="0.35"/>
<line x1="352.5" y1="770.0" x2="352.5" y2="808.0" stroke="#ffff90" stroke-width="1.0" stroke-opacity="0.9"/>
<line x1="347.5" y1="770.0" x2="347.5" y2="808.0" stroke="#ffb000" stroke-width="3.3" stroke-opacity="0.35"/>
<line x1="347.5" y1="770.0" x2="347.5" y2="808.0" stroke="#ffff90" stroke-width="1.1" stroke-opacity="0.9"/>
<line x1="389.0" y1="575.0" x2="390.0" y2="600.0" stroke="#ffb000" stroke-width="3.0" stroke-opacity="0.35"/>
<line x1="389.0" y1="575.0" x2="390.0" y2="600.0" stroke="#ffff90" stroke-width="1.0" stroke-opacity="0.9"/>
<ellipse cx="348.0" cy="158.0" rx="3.5" ry="10.0" fill="url(#glw)"/>
<rect x="346.8" y="152.5" width="2.4" height="11.0" fill="#fff"/>
<ellipse cx="356.5" cy="240.0" rx="3.5" ry="12.0" fill="url(#glw)"/>
<rect x="355.3" y="233.4" width="2.4" height="13.2" fill="#fff"/>
<ellipse cx="417.0" cy="283.5" rx="2.5" ry="5.0" fill="url(#glw)"/>
<rect x="415.8" y="280.8" width="2.4" height="5.5" fill="#fff"/>
<ellipse cx="376.5" cy="441.0" rx="3.5" ry="12.0" fill="url(#glw)"/>
<rect x="375.3" y="434.4" width="2.4" height="13.2" fill="#fff"/>
<ellipse cx="433.7" cy="438.6" rx="3.5" ry="10.0" fill="url(#glw)"/>
<rect x="432.5" y="433.1" width="2.4" height="11.0" fill="#fff"/>
<ellipse cx="338.8" cy="597.9" rx="4.0" ry="14.0" fill="url(#glw)"/>
<rect x="337.6" y="590.2" width="2.4" height="15.4" fill="#fff"/>
<ellipse cx="326.4" cy="643.4" rx="3.5" ry="12.0" fill="url(#glw)"/>
<rect x="325.2" y="636.8" width="2.4" height="13.2" fill="#fff"/>
<ellipse cx="390.0" cy="590.0" rx="3.0" ry="8.0" fill="url(#glw)"/>
<rect x="388.8" y="585.6" width="2.4" height="8.8" fill="#fff"/>
<ellipse cx="353.8" cy="740.3" rx="3.5" ry="12.0" fill="url(#glw)"/>
<rect x="352.6" y="733.7" width="2.4" height="13.2" fill="#fff"/>
<ellipse cx="347.6" cy="797.6" rx="3.5" ry="12.0" fill="url(#glw)"/>
<rect x="346.4" y="791.0" width="2.4" height="13.2" fill="#fff"/>
<rect x="348.6" y="159.3" width="16.4" height="2.3" fill="#d20000"/>
<rect x="356.5" y="239.0" width="39.5" height="6.2" fill="#d20000"/>
<rect x="417.5" y="282.5" width="26.5" height="2.1" fill="#d20000"/>
<rect x="377.5" y="439.8" width="20.5" height="5.8" fill="#d20000"/>
<rect x="351.0" y="441.8" width="13.0" height="2.5" fill="#d20000"/>
<rect x="433.5" y="434.0" width="11.5" height="4.6" fill="#d20000"/>
<rect x="399.0" y="435.3" width="13.0" height="2.0" fill="#d20000"/>
<rect x="339.8" y="592.8" width="11.9" height="9.8" fill="#d20000"/>
<rect x="306.0" y="593.0" width="27.0" height="8.5" fill="#d20000"/>
<rect x="326.8" y="637.8" width="24.9" height="6.2" fill="#d20000"/>
<rect x="306.0" y="638.0" width="14.7" height="4.4" fill="#d20000"/>
<rect x="351.7" y="588.6" width="22.8" height="1.6" fill="#d20000"/>
<rect x="354.5" y="738.0" width="33.5" height="4.0" fill="#d20000"/>
<rect x="348.0" y="794.5" width="14.0" height="3.3" fill="#d20000"/>
<rect x="306.0" y="794.0" width="19.0" height="3.2" fill="#d20000"/>
<rect x="366.0" y="158.7" width="2" height="1.6" fill="#fff"/>
<rect x="397.0" y="242.2" width="2" height="1.6" fill="#fff"/>
<rect x="445.0" y="282.2" width="2" height="1.6" fill="#fff"/>
<rect x="399.0" y="442.2" width="2" height="1.6" fill="#fff"/>
<rect x="322.0" y="597.2" width="2" height="1.6" fill="#fff"/>
<rect x="334.0" y="597.2" width="2" height="1.6" fill="#fff"/>
<rect x="321.0" y="639.2" width="2" height="1.6" fill="#fff"/>
<rect x="363.0" y="441.2" width="2" height="1.6" fill="#fff"/>
<rect x="412.0" y="435.2" width="2" height="1.6" fill="#fff"/>
<rect x="375.0" y="588.2" width="2" height="1.6" fill="#fff"/>
<rect x="388.0" y="739.2" width="2" height="1.6" fill="#fff"/>
<rect x="363.0" y="795.2" width="2" height="1.6" fill="#fff"/>
<rect x="326.0" y="795.2" width="2" height="1.6" fill="#fff"/>
<rect x="305.00" y="459" width="371.00" height="4" fill="#e20000"/>
</g>
<rect x="305.00" y="113.00" width="371.00" height="696.00" fill="none" stroke="#000" stroke-width="1.60"/>
<line x1="305.00" y1="809.00" x2="305.00" y2="816.00" stroke="#000" stroke-width="1.60"/>
<text transform="translate(305.20 831.60) scale(1.000 1)" font-family="Liberation Sans" font-size="10.6" text-anchor="middle" fill="#000">0</text>
<line x1="365.00" y1="809.00" x2="365.00" y2="816.00" stroke="#000" stroke-width="1.60"/>
<text transform="translate(365.20 831.60) scale(1.000 1)" font-family="Liberation Sans" font-size="10.6" text-anchor="middle" fill="#000">200</text>
<line x1="425.00" y1="809.00" x2="425.00" y2="816.00" stroke="#000" stroke-width="1.60"/>
<text transform="translate(425.20 831.60) scale(1.000 1)" font-family="Liberation Sans" font-size="10.6" text-anchor="middle" fill="#000">400</text>
<line x1="485.00" y1="809.00" x2="485.00" y2="816.00" stroke="#000" stroke-width="1.60"/>
<text transform="translate(485.20 831.60) scale(1.000 1)" font-family="Liberation Sans" font-size="10.6" text-anchor="middle" fill="#000">600</text>
<line x1="545.00" y1="809.00" x2="545.00" y2="816.00" stroke="#000" stroke-width="1.60"/>
<text transform="translate(545.20 831.60) scale(1.000 1)" font-family="Liberation Sans" font-size="10.6" text-anchor="middle" fill="#000">800</text>
<line x1="605.00" y1="809.00" x2="605.00" y2="816.00" stroke="#000" stroke-width="1.60"/>
<text transform="translate(605.20 831.60) scale(1.000 1)" font-family="Liberation Sans" font-size="10.6" text-anchor="middle" fill="#000">1000</text>
<line x1="665.00" y1="809.00" x2="665.00" y2="816.00" stroke="#000" stroke-width="1.60"/>
<text transform="translate(665.20 831.60) scale(1.000 1)" font-family="Liberation Sans" font-size="10.6" text-anchor="middle" fill="#000">1200</text>
<text transform="translate(490.60 849.60) scale(1.000 1)" font-family="Liberation Sans" font-size="11" text-anchor="middle" fill="#000">X</text>
<line x1="298.00" y1="809.00" x2="305.00" y2="809.00" stroke="#000" stroke-width="1.60"/>
<text transform="translate(291.00 812.70) scale(1.000 1)" font-family="Liberation Sans" font-size="10.6" text-anchor="end" fill="#000">0</text>
<line x1="298.00" y1="659.12" x2="305.00" y2="659.12" stroke="#000" stroke-width="1.60"/>
<text transform="translate(291.00 662.83) scale(1.000 1)" font-family="Liberation Sans" font-size="10.6" text-anchor="end" fill="#000">500</text>
<line x1="298.00" y1="509.25" x2="305.00" y2="509.25" stroke="#000" stroke-width="1.60"/>
<text transform="translate(291.00 512.95) scale(1.000 1)" font-family="Liberation Sans" font-size="10.6" text-anchor="end" fill="#000">1000</text>
<line x1="298.00" y1="359.38" x2="305.00" y2="359.38" stroke="#000" stroke-width="1.60"/>
<text transform="translate(291.00 363.07) scale(1.000 1)" font-family="Liberation Sans" font-size="10.6" text-anchor="end" fill="#000">1500</text>
<line x1="298.00" y1="209.50" x2="305.00" y2="209.50" stroke="#000" stroke-width="1.60"/>
<text transform="translate(291.00 213.20) scale(1.000 1)" font-family="Liberation Sans" font-size="10.6" text-anchor="end" fill="#000">2000</text>
<text transform="translate(253.20 460.80) rotate(-90) scale(1.000 1)" font-family="Liberation Sans" font-size="11" text-anchor="middle" fill="#000">Y</text>
<defs><linearGradient id="hot" x1="0" y1="1" x2="0" y2="0">
<stop offset="0.0000" stop-color="#0b0000"/>
<stop offset="0.3651" stop-color="#ff0000"/>
<stop offset="0.7460" stop-color="#ffff00"/>
<stop offset="1.0000" stop-color="#ffffff"/>
</linearGradient></defs>
<rect x="712.00" y="113.00" width="35.00" height="696.00" fill="url(#hot)" stroke="#000" stroke-width="1.60"/>
<line x1="747.00" y1="809.00" x2="754.00" y2="809.00" stroke="#000" stroke-width="1.60"/>
<text transform="translate(762.40 812.70) scale(1.000 1)" font-family="Liberation Sans" font-size="10.6" text-anchor="start" fill="#000">0</text>
<line x1="747.00" y1="693.00" x2="754.00" y2="693.00" stroke="#000" stroke-width="1.60"/>
<text transform="translate(762.40 696.70) scale(1.000 1)" font-family="Liberation Sans" font-size="10.6" text-anchor="start" fill="#000">500</text>
<line x1="747.00" y1="577.00" x2="754.00" y2="577.00" stroke="#000" stroke-width="1.60"/>
<text transform="translate(762.40 580.70) scale(1.000 1)" font-family="Liberation Sans" font-size="10.6" text-anchor="start" fill="#000">1000</text>
<line x1="747.00" y1="461.00" x2="754.00" y2="461.00" stroke="#000" stroke-width="1.60"/>
<text transform="translate(762.40 464.70) scale(1.000 1)" font-family="Liberation Sans" font-size="10.6" text-anchor="start" fill="#000">1500</text>
<line x1="747.00" y1="345.00" x2="754.00" y2="345.00" stroke="#000" stroke-width="1.60"/>
<text transform="translate(762.40 348.70) scale(1.000 1)" font-family="Liberation Sans" font-size="10.6" text-anchor="start" fill="#000">2000</text>
<line x1="747.00" y1="229.00" x2="754.00" y2="229.00" stroke="#000" stroke-width="1.60"/>
<text transform="translate(762.40 232.70) scale(1.000 1)" font-family="Liberation Sans" font-size="10.6" text-anchor="start" fill="#000">2500</text>
<line x1="747.00" y1="113.00" x2="754.00" y2="113.00" stroke="#000" stroke-width="1.60"/>
<text transform="translate(762.40 116.70) scale(1.000 1)" font-family="Liberation Sans" font-size="10.6" text-anchor="start" fill="#000">3000</text>
<path d="M911.0 232.8 L991.8 232.8 L991.8 158.8 L997.0 158.8 L997.0 122.7 L1002.8 122.7 L1002.8 118.6 L1008.8 118.6 L1008.8 135.0 L1013.7 135.0 L1013.7 141.7 L1019.7 141.7 L1019.7 144.7 L1025.0 144.7 L1025.0 147.7 L1031.6 147.7 L1031.6 148.7 L1036.9 148.7 L1036.9 150.8 L1043.0 150.8 L1043.0 152.0 L1048.6 152.0 L1048.6 152.9 L1058.9 152.9 L1058.9 153.8 L1070.3 153.8 L1070.3 155.0 L1087.0 155.0 L1087.0 156.1 L1097.6 156.1 L1097.6 156.9 L1103.7 156.9 L1103.7 157.8 L1114.3 157.8 L1114.3 158.8 L1120.3 158.8 L1120.3 159.9 L1137.0 159.9 L1137.0 160.8 L1148.4 160.8 L1148.4 161.9 L1165.1 161.9 L1165.1 162.9 L1181.8 162.9 L1181.8 131.8 L1185.3 131.8" fill="none" stroke="#0000ff" stroke-width="1.5" stroke-linejoin="miter"/>
<rect x="911.00" y="113.00" width="274.00" height="119.80" fill="none" stroke="#000" stroke-width="1.60"/>
<line x1="904.00" y1="232.80" x2="911.00" y2="232.80" stroke="#000" stroke-width="1.60"/>
<text transform="translate(896.60 236.50) scale(1.000 1)" font-family="Liberation Sans" font-size="10.6" text-anchor="end" fill="#000">0</text>
<line x1="904.00" y1="195.24" x2="911.00" y2="195.24" stroke="#000" stroke-width="1.60"/>
<text transform="translate(896.60 198.94) scale(1.000 1)" font-family="Liberation Sans" font-size="10.6" text-anchor="end" fill="#000">2</text>
<line x1="904.00" y1="157.68" x2="911.00" y2="157.68" stroke="#000" stroke-width="1.60"/>
<text transform="translate(896.60 161.38) scale(1.000 1)" font-family="Liberation Sans" font-size="10.6" text-anchor="end" fill="#000">4</text>
<line x1="904.00" y1="120.12" x2="911.00" y2="120.12" stroke="#000" stroke-width="1.60"/>
<text transform="translate(896.60 123.82) scale(1.000 1)" font-family="Liberation Sans" font-size="10.6" text-anchor="end" fill="#000">6</text>
<line x1="911.00" y1="232.80" x2="911.00" y2="239.80" stroke="#000" stroke-width="1.60"/>
<line x1="957.40" y1="232.80" x2="957.40" y2="239.80" stroke="#000" stroke-width="1.60"/>
<line x1="1003.80" y1="232.80" x2="1003.80" y2="239.80" stroke="#000" stroke-width="1.60"/>
<line x1="1050.20" y1="232.80" x2="1050.20" y2="239.80" stroke="#000" stroke-width="1.60"/>
<line x1="1096.60" y1="232.80" x2="1096.60" y2="239.80" stroke="#000" stroke-width="1.60"/>
<line x1="1143.00" y1="232.80" x2="1143.00" y2="239.80" stroke="#000" stroke-width="1.60"/>
<text transform="translate(911.20 256.20) scale(1.000 1)" font-family="Liberation Sans" font-size="10.6" text-anchor="middle" fill="#000">0</text>
<text transform="translate(1004.00 256.20) scale(1.000 1)" font-family="Liberation Sans" font-size="10.6" text-anchor="middle" fill="#000">1000</text>
<text transform="translate(1096.80 256.20) scale(1.000 1)" font-family="Liberation Sans" font-size="10.6" text-anchor="middle" fill="#000">2000</text>
<text transform="translate(1047.80 273.90) scale(1.000 1)" font-family="Liberation Sans" font-size="11" text-anchor="middle" fill="#000">counts</text>
<text transform="translate(878.60 173.80) rotate(-90) scale(1.100 1)" font-family="Liberation Sans" font-size="11" text-anchor="middle" fill="#000">log frequency</text>
<text transform="translate(1193.60 174.80) rotate(90) scale(1.110 1)" font-family="Liberation Sans" font-size="11" text-anchor="middle" fill="#000">histogram (detail)</text>
<path d="M911.0 404.8 L924.9 404.8 L924.9 311.1 L930.2 311.1 L930.2 290.8 L935.8 290.8 L935.8 314.1 L940.9 314.1 L940.9 319.1 L946.6 319.1 L946.6 323.0 L952.6 323.0 L952.6 324.5 L958.1 324.5 L958.1 328.9 L963.8 328.9 L963.8 332.0 L969.3 332.0 L969.3 344.0 L975.0 344.0 L975.0 357.7 L981.0 357.7 L981.0 359.9 L986.2 359.9 L986.2 361.1 L996.7 361.1 L996.7 361.9 L1002.9 361.9 L1002.9 364.0 L1013.8 364.0 L1013.8 366.1 L1020.6 366.1 L1020.6 367.0 L1036.3 367.0 L1036.3 368.2 L1042.2 368.2 L1042.2 369.6 L1048.0 369.6 L1048.0 370.4 L1053.2 370.4 L1053.2 371.6 L1059.2 371.6 L1059.2 373.0 L1069.7 373.0 L1069.7 373.9 L1075.6 373.9 L1075.6 373.0 L1080.9 373.0 L1080.9 374.5 L1086.9 374.5 L1086.9 373.0 L1091.6 373.0 L1091.6 376.9 L1098.1 376.9 L1098.1 377.9 L1103.6 377.9 L1103.6 375.7 L1108.8 375.7 L1108.8 378.7 L1114.5 378.7 L1114.5 377.9 L1120.5 377.9 L1120.5 378.7 L1125.7 378.7 L1125.7 377.2 L1131.4 377.2 L1131.4 378.7 L1142.9 378.7 L1142.9 380.6 L1148.1 380.6 L1148.1 379.7 L1158.6 379.7 L1158.6 378.7 L1164.6 378.7 L1164.6 377.9 L1170.6 377.9 L1170.6 349.1 L1175.9 349.1 L1175.9 404.8 L1185.0 404.8" fill="none" stroke="#0000ff" stroke-width="1.5" stroke-linejoin="miter"/>
<rect x="911.00" y="285.00" width="274.00" height="119.80" fill="none" stroke="#000" stroke-width="1.60"/>
<line x1="904.00" y1="404.80" x2="911.00" y2="404.80" stroke="#000" stroke-width="1.60"/>
<text transform="translate(896.60 408.50) scale(1.000 1)" font-family="Liberation Sans" font-size="10.6" text-anchor="end" fill="#000">0</text>
<line x1="904.00" y1="369.26" x2="911.00" y2="369.26" stroke="#000" stroke-width="1.60"/>
<text transform="translate(896.60 372.96) scale(1.000 1)" font-family="Liberation Sans" font-size="10.6" text-anchor="end" fill="#000">2</text>
<line x1="904.00" y1="333.72" x2="911.00" y2="333.72" stroke="#000" stroke-width="1.60"/>
<text transform="translate(896.60 337.42) scale(1.000 1)" font-family="Liberation Sans" font-size="10.6" text-anchor="end" fill="#000">4</text>
<line x1="904.00" y1="298.18" x2="911.00" y2="298.18" stroke="#000" stroke-width="1.60"/>
<text transform="translate(896.60 301.88) scale(1.000 1)" font-family="Liberation Sans" font-size="10.6" text-anchor="end" fill="#000">6</text>
<line x1="929.00" y1="404.80" x2="929.00" y2="411.80" stroke="#000" stroke-width="1.60"/>
<line x1="966.33" y1="404.80" x2="966.33" y2="411.80" stroke="#000" stroke-width="1.60"/>
<line x1="1003.66" y1="404.80" x2="1003.66" y2="411.80" stroke="#000" stroke-width="1.60"/>
<line x1="1040.99" y1="404.80" x2="1040.99" y2="411.80" stroke="#000" stroke-width="1.60"/>
<line x1="1078.32" y1="404.80" x2="1078.32" y2="411.80" stroke="#000" stroke-width="1.60"/>
<line x1="1115.65" y1="404.80" x2="1115.65" y2="411.80" stroke="#000" stroke-width="1.60"/>
<line x1="1152.98" y1="404.80" x2="1152.98" y2="411.80" stroke="#000" stroke-width="1.60"/>
<text transform="translate(929.20 428.00) scale(1.000 1)" font-family="Liberation Sans" font-size="10.6" text-anchor="middle" fill="#000">0</text>
<text transform="translate(1003.86 428.00) scale(1.000 1)" font-family="Liberation Sans" font-size="10.6" text-anchor="middle" fill="#000">20000</text>
<text transform="translate(1078.52 428.00) scale(1.000 1)" font-family="Liberation Sans" font-size="10.6" text-anchor="middle" fill="#000">40000</text>
<text transform="translate(1153.18 428.00) scale(1.000 1)" font-family="Liberation Sans" font-size="10.6" text-anchor="middle" fill="#000">60000</text>
<text transform="translate(1047.80 445.70) scale(1.000 1)" font-family="Liberation Sans" font-size="11" text-anchor="middle" fill="#000">counts</text>
<text transform="translate(878.60 345.80) rotate(-90) scale(1.100 1)" font-family="Liberation Sans" font-size="11" text-anchor="middle" fill="#000">log frequency</text>
<text transform="translate(1193.60 351.40) rotate(90) scale(1.178 1)" font-family="Liberation Sans" font-size="11" text-anchor="middle" fill="#000">histogram (full)</text>
</svg></body></html>
